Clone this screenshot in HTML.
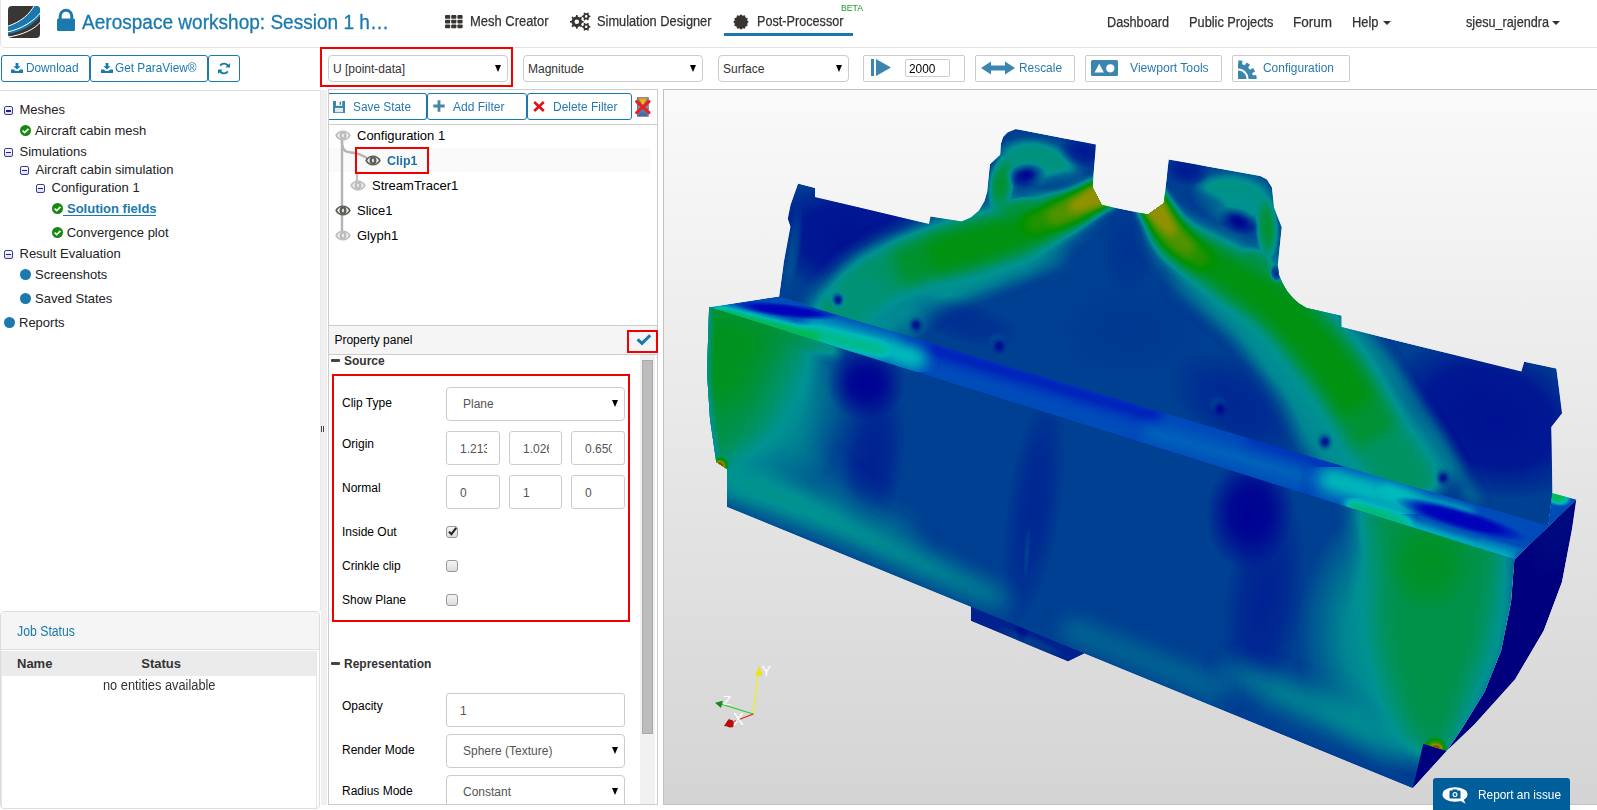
<!DOCTYPE html>
<html>
<head>
<meta charset="utf-8">
<title>Aerospace workshop</title>
<style>
*{box-sizing:border-box;margin:0;padding:0}
html,body{width:1597px;height:810px;overflow:hidden;background:#fff;font-family:"Liberation Sans",sans-serif;color:#222}
.abs{position:absolute}
#hdr{position:absolute;left:0;top:-2px;width:1610px;height:50px;border:1px solid #e4e4e4;border-radius:0 0 0 5px;background:#fff}
.lato{font-family:"Liberation Sans",sans-serif}
.t{position:absolute;white-space:nowrap;line-height:1}
.nav{font-size:14.2px;color:#333;top:15px}
.btn{position:absolute;border:1px solid #1a7aad;border-radius:3px;background:#fff;color:#1a7aad;font-size:13px;height:27px}
.sel{position:absolute;border:1px solid #ccc;border-radius:4px;background:#fff;height:26px;font-size:12px;color:#333}
.sel .tx{position:absolute;left:5px;top:7px;line-height:1;white-space:nowrap}
.sel .ar{position:absolute;right:6px;top:9px;width:0;height:0;border-left:3.5px solid transparent;border-right:3.5px solid transparent;border-top:7px solid #000}
.tb{position:absolute;border:1px solid #ccc;border-radius:2px;background:#fff;height:28px;top:54px;font-size:12px;color:#2a7ab0}
.tree{font-size:13px;color:#222}
.exp{position:absolute;width:9px;height:9px;border:1px solid #3a3aa0;border-radius:2px;background:linear-gradient(#fff,#dde)}
.exp:after{content:"";position:absolute;left:1px;top:3px;width:5px;height:1.5px;background:#22228a}
.ok{position:absolute;width:11px;height:11px;border-radius:50%;background:#138a13}
.dot{position:absolute;width:11px;height:11px;border-radius:50%;background:#1a7aad}
.lbl{position:absolute;font-size:12px;color:#000;white-space:nowrap;line-height:1}
.inp{position:absolute;border:1px solid #ccc;border-radius:3px;background:#fff;height:34px;font-size:12px;color:#555;overflow:hidden}
.inp span{position:absolute;left:13px;top:11px;line-height:1;white-space:nowrap}
.cb{position:absolute;width:12px;height:12px;border:1px solid #999;border-radius:3px;background:linear-gradient(#f4f4f4,#ddd)}
</style>
</head>
<body>
<!-- HEADER -->
<div id="hdr"></div>

<svg class="abs" style="left:8px;top:6px" width="32" height="32" viewBox="0 0 32 32">
<defs><clipPath id="lgc"><rect x="0" y="0" width="32" height="32" rx="4"/></clipPath></defs>
<g clip-path="url(#lgc)">
<rect width="32" height="32" fill="#3a3633"/>
<path d="M-1 20.5 C13 16 22 8 26.5 -1 L33 -1 L33 9 C26 19 14 26 -1 28.5 Z" fill="#1a78ae"/>
<path d="M-1 20.5 C13 16 22 8 26.5 -1" fill="none" stroke="#fff" stroke-width="1"/>
<path d="M-1 26 C14 23 26 15 33 6" fill="none" stroke="#fff" stroke-width="1"/>
<path d="M-1 31.2 C15 29 27 23 33 15.5" fill="none" stroke="#fff" stroke-width="1"/>
</g></svg>
<svg class="abs" style="left:56px;top:8px" width="20" height="24" viewBox="0 0 20 24">
<path d="M4.2 11.5 V8.1 a5.8 5.8 0 0 1 11.6 0 V11.5" fill="none" stroke="#1a7aad" stroke-width="3"/>
<rect x="1" y="10.5" width="18" height="12.5" rx="1.5" fill="#1a7aad"/>
</svg>
<span class="t" style="left:82px;top:12.27px;font-size:20px;color:#1a7aad;font-weight:400;transform:scaleX(0.9522);transform-origin:0 0;-webkit-text-stroke:0.3px #1a7aad;">Aerospace workshop: Session 1 h…</span>
<svg class="abs" style="left:445px;top:14.5px" width="18" height="14" viewBox="0 0 18 14"><rect x="0.0" y="0.0" width="5.2" height="3.8" rx="0.9" fill="#3a3430"/><rect x="6.2" y="0.0" width="5.2" height="3.8" rx="0.9" fill="#3a3430"/><rect x="12.4" y="0.0" width="5.2" height="3.8" rx="0.9" fill="#3a3430"/><rect x="0.0" y="4.7" width="5.2" height="3.8" rx="0.9" fill="#3a3430"/><rect x="6.2" y="4.7" width="5.2" height="3.8" rx="0.9" fill="#3a3430"/><rect x="12.4" y="4.7" width="5.2" height="3.8" rx="0.9" fill="#3a3430"/><rect x="0.0" y="9.4" width="5.2" height="3.8" rx="0.9" fill="#3a3430"/><rect x="6.2" y="9.4" width="5.2" height="3.8" rx="0.9" fill="#3a3430"/><rect x="12.4" y="9.4" width="5.2" height="3.8" rx="0.9" fill="#3a3430"/></svg><span class="t" style="left:470px;top:13.95px;font-size:14px;color:#333;font-weight:400;transform:scaleX(0.9256);transform-origin:0 0;-webkit-text-stroke:0.25px #333;">Mesh Creator</span><svg class="abs" style="left:570px;top:12px" width="21" height="19" viewBox="0 0 21 19"><path d="M13.66 9.04 L13.66 10.56 L12.01 10.76 L11.17 12.80 L12.18 14.11 L11.11 15.18 L9.80 14.17 L7.76 15.01 L7.56 16.66 L6.04 16.66 L5.84 15.01 L3.80 14.17 L2.49 15.18 L1.42 14.11 L2.43 12.80 L1.59 10.76 L-0.06 10.56 L-0.06 9.04 L1.59 8.84 L2.43 6.80 L1.42 5.49 L2.49 4.42 L3.80 5.43 L5.84 4.59 L6.04 2.94 L7.56 2.94 L7.76 4.59 L9.80 5.43 L11.11 4.42 L12.18 5.49 L11.17 6.80 L12.01 8.84Z M9.10 9.80 a2.3 2.3 0 1 0 -4.6 0 a2.3 2.3 0 1 0 4.6 0Z" fill="#3a3430" fill-rule="evenodd"/><path d="M20.45 3.77 L20.45 5.03 L19.28 5.28 L18.50 6.63 L18.87 7.77 L17.78 8.40 L16.98 7.50 L15.42 7.50 L14.62 8.40 L13.53 7.77 L13.90 6.63 L13.12 5.28 L11.95 5.03 L11.95 3.77 L13.12 3.52 L13.90 2.17 L13.53 1.03 L14.62 0.40 L15.42 1.30 L16.98 1.30 L17.78 0.40 L18.87 1.03 L18.50 2.17 L19.28 3.52Z M17.50 4.40 a1.3 1.3 0 1 0 -2.6 0 a1.3 1.3 0 1 0 2.6 0Z" fill="#3a3430" fill-rule="evenodd"/><path d="M20.45 14.17 L20.45 15.43 L19.28 15.68 L18.50 17.03 L18.87 18.17 L17.78 18.80 L16.98 17.90 L15.42 17.90 L14.62 18.80 L13.53 18.17 L13.90 17.03 L13.12 15.68 L11.95 15.43 L11.95 14.17 L13.12 13.92 L13.90 12.57 L13.53 11.43 L14.62 10.80 L15.42 11.70 L16.98 11.70 L17.78 10.80 L18.87 11.43 L18.50 12.57 L19.28 13.92Z M17.50 14.80 a1.3 1.3 0 1 0 -2.6 0 a1.3 1.3 0 1 0 2.6 0Z" fill="#3a3430" fill-rule="evenodd"/></svg><span class="t" style="left:597px;top:13.95px;font-size:14px;color:#333;font-weight:400;transform:scaleX(0.9138);transform-origin:0 0;-webkit-text-stroke:0.25px #333;">Simulation Designer</span><svg class="abs" style="left:733px;top:13.5px" width="16" height="16" viewBox="0 0 16 16"><polygon points="15.70 8.00 14.18 9.66 14.67 11.85 12.53 12.53 11.85 14.67 9.66 14.18 8.00 15.70 6.34 14.18 4.15 14.67 3.47 12.53 1.33 11.85 1.82 9.66 0.30 8.00 1.82 6.34 1.33 4.15 3.47 3.47 4.15 1.33 6.34 1.82 8.00 0.30 9.66 1.82 11.85 1.33 12.53 3.47 14.67 4.15 14.18 6.34" fill="#3a3430"/></svg><span class="t" style="left:756.5px;top:13.95px;font-size:14px;color:#333;font-weight:400;transform:scaleX(0.9038);transform-origin:0 0;-webkit-text-stroke:0.25px #333;">Post-Processor</span><span class="t" style="left:841px;top:4.18px;font-size:9px;color:#1f9a2a;font-weight:400;transform:scaleX(0.9631);transform-origin:0 0;">BETA</span><div class="abs" style="left:724px;top:33px;width:129px;height:3px;background:#1a78ae"></div><span class="t" style="left:1107px;top:14.95px;font-size:14px;color:#333;font-weight:400;transform:scaleX(0.9051);transform-origin:0 0;-webkit-text-stroke:0.25px #333;">Dashboard</span><span class="t" style="left:1189px;top:14.95px;font-size:14px;color:#333;font-weight:400;transform:scaleX(0.9126);transform-origin:0 0;-webkit-text-stroke:0.25px #333;">Public Projects</span><span class="t" style="left:1293px;top:14.95px;font-size:14px;color:#333;font-weight:400;transform:scaleX(0.9641);transform-origin:0 0;-webkit-text-stroke:0.25px #333;">Forum</span><span class="t" style="left:1352px;top:14.95px;font-size:14px;color:#333;font-weight:400;transform:scaleX(0.9202);transform-origin:0 0;-webkit-text-stroke:0.25px #333;">Help</span><div class="abs" style="left:1383px;top:21px;width:0;height:0;border-left:4px solid transparent;border-right:4px solid transparent;border-top:4px solid #333"></div><span class="t" style="left:1466px;top:14.95px;font-size:14px;color:#333;font-weight:400;transform:scaleX(0.9037);transform-origin:0 0;-webkit-text-stroke:0.25px #333;">sjesu_rajendra</span><div class="abs" style="left:1552px;top:21px;width:0;height:0;border-left:4px solid transparent;border-right:4px solid transparent;border-top:4px solid #333"></div>
<div class="btn" style="left:1px;top:55px;width:89px"></div><svg class="abs" style="left:11px;top:62.5px" width="12" height="10" viewBox="0 0 12 10"><path d="M4.6 0h2.8v3.2h2.2L6 6.6 2.4 3.2h2.2z M0 6.6h3l1.6 1.5h2.8L9 6.6h3V10H0z" fill="#1a7aad"/></svg><span class="t" style="left:25.5px;top:61.3px;font-size:13px;color:#1a7aad;font-weight:400;transform:scaleX(0.9079);transform-origin:0 0;">Download</span><div class="btn" style="left:90px;top:55px;width:118px"></div><svg class="abs" style="left:101px;top:62.5px" width="12" height="10" viewBox="0 0 12 10"><path d="M4.6 0h2.8v3.2h2.2L6 6.6 2.4 3.2h2.2z M0 6.6h3l1.6 1.5h2.8L9 6.6h3V10H0z" fill="#1a7aad"/></svg><span class="t" style="left:115px;top:61.3px;font-size:13px;color:#1a7aad;font-weight:400;transform:scaleX(0.9101);transform-origin:0 0;">Get ParaView®</span><div class="btn" style="left:208px;top:55px;width:32px"></div><svg class="abs" style="left:218px;top:62px" width="12" height="13" viewBox="0 0 12 13"><path d="M10.3 4.6 A4.6 4.6 0 0 0 2.2 3.6" fill="none" stroke="#1a7aad" stroke-width="1.9"/><path d="M1.7 8.4 A4.6 4.6 0 0 0 9.8 9.4" fill="none" stroke="#1a7aad" stroke-width="1.9"/><path d="M12 1v4.6H7.4z M0 12V7.4h4.6z" fill="#1a7aad"/></svg><div class="abs" style="left:320px;top:47px;width:193px;height:40px;border:2px solid #f00000"></div><div class="sel" style="left:328px;top:55px;width:180px;height:27px"></div><span class="t" style="left:333px;top:62.64px;font-size:12px;color:#333;font-weight:400;">U [point-data]</span><div class="abs" style="left:495px;top:64.5px;width:0;height:0;border-left:3.5px solid transparent;border-right:3.5px solid transparent;border-top:7px solid #000"></div><div class="sel" style="left:523px;top:55px;width:180px;height:27px"></div><span class="t" style="left:528px;top:62.64px;font-size:12px;color:#333;font-weight:400;">Magnitude</span><div class="abs" style="left:690px;top:64.5px;width:0;height:0;border-left:3.5px solid transparent;border-right:3.5px solid transparent;border-top:7px solid #000"></div><div class="sel" style="left:718px;top:55px;width:131px;height:27px"></div><span class="t" style="left:723px;top:62.64px;font-size:12px;color:#333;font-weight:400;">Surface</span><div class="abs" style="left:836px;top:64.5px;width:0;height:0;border-left:3.5px solid transparent;border-right:3.5px solid transparent;border-top:7px solid #000"></div><div class="tb" style="left:863px;width:102px;top:55px;height:27px"></div><svg class="abs" style="left:871px;top:59px" width="21" height="17" viewBox="0 0 21 17"><rect x="0" y="0" width="3" height="17" fill="#3a86ae"/><path d="M5 0 L20 8.5 L5 17z" fill="#3a86ae"/></svg><div class="abs" style="left:905px;top:59px;width:45px;height:18px;border:1px solid #ccc;border-radius:2px;background:#fff"></div><span class="t" style="left:909px;top:61.5px;font-size:13px;color:#000;font-weight:400;transform:scaleX(0.9163);transform-origin:0 0;">2000</span><div class="tb" style="left:975px;width:100px;top:55px;height:27px"></div><svg class="abs" style="left:981px;top:61px" width="34" height="14" viewBox="0 0 34 14"><path d="M0 7 L10 0.5 V4.6 H24 V0.5 L34 7 L24 13.5 V9.4 H10 V13.5z" fill="#3a86ae"/></svg><span class="t" style="left:1018.5px;top:62.14px;font-size:12px;color:#2a7ab0;font-weight:400;transform:scaleX(0.9917);transform-origin:0 0;">Rescale</span><div class="tb" style="left:1085px;width:137px;top:55px;height:27px"></div><svg class="abs" style="left:1091px;top:60px" width="27" height="16" viewBox="0 0 27 16"><rect width="27" height="16" rx="1.5" fill="#3a86ae"/><path d="M3.5 12.5 L8.2 3.8 L12.9 12.5z" fill="#fff"/><circle cx="19.3" cy="8.3" r="4.1" fill="#fff"/></svg><span class="t" style="left:1130.3px;top:62.14px;font-size:12px;color:#2a7ab0;font-weight:400;transform:scaleX(1.0141);transform-origin:0 0;">Viewport Tools</span><div class="tb" style="left:1232px;width:118px;top:55px;height:27px"></div><svg class="abs" style="left:1238px;top:58px" width="21" height="21" viewBox="0 0 21 21"><path d="M0 12.5 A8.5 8.5 0 0 1 8.5 21 H0z" fill="#3a86ae"/><path d="M0 5.8 A15.2 15.2 0 0 1 15.2 21 H10.6 A10.6 10.6 0 0 0 0 10.4z" fill="#3a86ae"/><rect x="0.12" y="2.55" width="4" height="5" fill="#3a86ae" transform="rotate(8 2.12 5.95)"/><rect x="6.50" y="5.00" width="4" height="5" fill="#3a86ae" transform="rotate(34 8.50 8.40)"/><rect x="11.16" y="10.00" width="4" height="5" fill="#3a86ae" transform="rotate(60 13.16 13.40)"/><rect x="13.12" y="16.01" width="4" height="5" fill="#3a86ae" transform="rotate(84 15.12 19.41)"/></svg><span class="t" style="left:1262.5px;top:62.14px;font-size:12px;color:#2a7ab0;font-weight:400;transform:scaleX(0.9945);transform-origin:0 0;">Configuration</span><div class="abs" style="left:0;top:90px;width:321px;height:1px;background:#ddd"></div>
<div class="exp" style="left:4px;top:106.0px"></div><span class="t" style="left:19.5px;top:102.6px;font-size:13px;color:#222;font-weight:400;">Meshes</span><svg class="abs" style="left:20px;top:125.0px" width="11" height="11" viewBox="0 0 11 11"><circle cx="5.5" cy="5.5" r="5.5" fill="#13890f"/><path d="M2.6 5.6 L4.7 7.6 L8.4 3.8" fill="none" stroke="#fff" stroke-width="1.7"/></svg><span class="t" style="left:35px;top:124.1px;font-size:13px;color:#222;font-weight:400;">Aircraft cabin mesh</span><div class="exp" style="left:4px;top:147.5px"></div><span class="t" style="left:19.5px;top:145.1px;font-size:13px;color:#222;font-weight:400;">Simulations</span><div class="exp" style="left:20px;top:165.5px"></div><span class="t" style="left:35.5px;top:163.3px;font-size:13px;color:#222;font-weight:400;">Aircraft cabin simulation</span><div class="exp" style="left:36px;top:183.5px"></div><span class="t" style="left:51.5px;top:181.3px;font-size:13px;color:#222;font-weight:400;">Configuration 1</span><svg class="abs" style="left:52px;top:203.0px" width="11" height="11" viewBox="0 0 11 11"><circle cx="5.5" cy="5.5" r="5.5" fill="#13890f"/><path d="M2.6 5.6 L4.7 7.6 L8.4 3.8" fill="none" stroke="#fff" stroke-width="1.7"/></svg><span class="t" style="left:67px;top:202.2px;font-size:13px;color:#1a7aad;font-weight:700;">Solution fields</span><div class="abs" style="left:63px;top:214.5px;width:93px;height:1px;background:#1a7aad"></div><svg class="abs" style="left:52px;top:227.0px" width="11" height="11" viewBox="0 0 11 11"><circle cx="5.5" cy="5.5" r="5.5" fill="#13890f"/><path d="M2.6 5.6 L4.7 7.6 L8.4 3.8" fill="none" stroke="#fff" stroke-width="1.7"/></svg><span class="t" style="left:66.7px;top:226.3px;font-size:13px;color:#222;font-weight:400;">Convergence plot</span><div class="exp" style="left:4px;top:249.5px"></div><span class="t" style="left:19.5px;top:247.1px;font-size:13px;color:#222;font-weight:400;">Result Evaluation</span><div class="dot" style="left:20px;top:269.0px"></div><span class="t" style="left:35px;top:268.3px;font-size:13px;color:#222;font-weight:400;">Screenshots</span><div class="dot" style="left:20px;top:293.0px"></div><span class="t" style="left:35px;top:292.3px;font-size:13px;color:#222;font-weight:400;">Saved States</span><div class="dot" style="left:4px;top:317.0px"></div><span class="t" style="left:19px;top:316.1px;font-size:13px;color:#222;font-weight:400;">Reports</span><div class="abs" style="left:0;top:611px;width:320px;height:198px;border:1px solid #ddd;border-radius:4px;background:#fff"></div><div class="abs" style="left:1px;top:612px;width:318px;height:38px;background:#f5f5f5;border-bottom:1px solid #ddd;border-radius:3px 3px 0 0"></div><span class="t" style="left:16.5px;top:623.65px;font-size:14px;color:#1a7aad;font-weight:400;transform:scaleX(0.8767);transform-origin:0 0;">Job Status</span><div class="abs" style="left:2px;top:651px;width:315px;height:25px;background:#ebebeb"></div><div class="abs" style="left:316px;top:651px;width:1px;height:157px;background:#e6e6e6"></div><div class="abs" style="left:1px;top:651px;width:1px;height:157px;background:#e6e6e6"></div><span class="t" style="left:17px;top:657.0px;font-size:13px;color:#333;font-weight:700;">Name</span><span class="t" style="left:141.3px;top:657.0px;font-size:13px;color:#333;font-weight:700;">Status</span><span class="t" style="left:102.6px;top:678.15px;font-size:14px;color:#333;font-weight:400;transform:scaleX(0.9148);transform-origin:0 0;">no entities available</span><div class="abs" style="left:320px;top:90px;width:1px;height:521px;background:#e8e8e8"></div><div class="abs" style="left:321px;top:90px;width:6px;height:720px;background:#f0f0f0"></div><div class="abs" style="left:321px;top:426px;width:1px;height:6px;background:#444"></div><div class="abs" style="left:323px;top:426px;width:1px;height:6px;background:#444"></div>
<div class="abs" style="left:328px;top:89px;width:330px;height:716px;border:1px solid #ccc;background:#fff"></div><div class="btn" style="left:329px;top:93px;width:98px;border-left:none;border-radius:0 3px 3px 0"></div><svg class="abs" style="left:333px;top:101px" width="12" height="12" viewBox="0 0 12 12"><rect x="0" y="0" width="12" height="12" fill="#3a86ae"/><rect x="3" y="0" width="6.2" height="4.8" fill="#fff"/><rect x="6.6" y="0.6" width="1.5" height="3.2" fill="#3a86ae"/><rect x="2" y="7" width="8" height="4.2" fill="#f2f2f2"/><rect x="2" y="8.4" width="8" height="0.7" fill="#cfd8dc"/><rect x="2" y="9.8" width="8" height="0.7" fill="#cfd8dc"/></svg><span class="t" style="left:353.3px;top:101.14px;font-size:12px;color:#2a7ab0;font-weight:400;transform:scaleX(0.9878);transform-origin:0 0;">Save State</span><div class="btn" style="left:427px;top:93px;width:100px"></div><svg class="abs" style="left:433px;top:100px" width="12" height="12" viewBox="0 0 12 12"><path d="M4.6 0.3h2.8v4.3H11.7v2.8H7.4v4.3H4.6V7.4H0.3V4.6h4.3z" fill="#4687a8"/></svg><span class="t" style="left:453px;top:101.14px;font-size:12px;color:#2a7ab0;font-weight:400;transform:scaleX(1.0027);transform-origin:0 0;">Add Filter</span><div class="btn" style="left:527px;top:93px;width:105px"></div><svg class="abs" style="left:533px;top:101px" width="12" height="11" viewBox="0 0 12 11"><path d="M1.2 1 L10.8 10 M10.8 1 L1.2 10" stroke="#e0101a" stroke-width="2.6" fill="none"/></svg><span class="t" style="left:553px;top:101.14px;font-size:12px;color:#2a7ab0;font-weight:400;transform:scaleX(0.9971);transform-origin:0 0;">Delete Filter</span><svg class="abs" style="left:633px;top:96px" width="20" height="22" viewBox="633 96 20 22"><defs><linearGradient id="hg1" x1="0" y1="0" x2="0" y2="1"><stop offset="0" stop-color="#f7941d"/><stop offset="1" stop-color="#ffd400"/></linearGradient><linearGradient id="hg2" x1="0" y1="0" x2="0" y2="1"><stop offset="0" stop-color="#27a3dd"/><stop offset="1" stop-color="#4a5aa8"/></linearGradient></defs><rect x="637" y="97.2" width="11.8" height="19.6" fill="#6f7a7c"/><rect x="638.2" y="103" width="9.4" height="8" fill="#7c9a8e"/><path d="M638 98.2H647.8L642.9 104.5z" fill="url(#hg1)"/><path d="M638 115.8H647.8L642.9 108.5z" fill="url(#hg2)"/><path d="M636.6 101.6 L649.1 112.6 M649.1 101.6 L636.6 112.6" stroke="#ee1c24" stroke-width="3" stroke-linecap="round"/></svg><div class="abs" style="left:329px;top:124px;width:328px;height:1px;background:#ccc"></div><div class="abs" style="left:329px;top:148px;width:322px;height:24px;background:#fafafa"></div><svg class="abs" style="left:329px;top:125px" width="328" height="200" viewBox="329 125 328 200"><path d="M342 140 V232" stroke="#b4b4b4" stroke-width="2.4" fill="none"/><path d="M342 141 C342 150 345 152 351 152.5 C358 153 362 155 367 158" stroke="#b4b4b4" stroke-width="2.4" fill="none"/><path d="M357 173 V182" stroke="#c4c4c4" stroke-width="2.4" fill="none"/></svg><svg class="abs" style="left:334.5px;top:130.0px" width="16" height="11" viewBox="0 0 16 11"><path d="M0.2 5.5 C3.4 -1.2 12.6 -1.2 15.8 5.5 C12.6 12.2 3.4 12.2 0.2 5.5z" fill="#bcbcbc"/><path d="M2.2 5.5 C4.8 0.6 11.2 0.6 13.8 5.5 C11.2 10.4 4.8 10.4 2.2 5.5z" fill="#f2f2f2"/><ellipse cx="8" cy="5.5" rx="3.5" ry="3.9" fill="#bcbcbc"/><ellipse cx="8" cy="5.5" rx="1.1" ry="1.9" fill="#f2f2f2" opacity="0.85"/></svg><span class="t" style="left:357px;top:129.2px;font-size:13px;color:#000;font-weight:400;">Configuration 1</span><div class="abs" style="left:355px;top:147px;width:74px;height:27px;border:2px solid #f00000"></div><svg class="abs" style="left:364.5px;top:155.0px" width="16" height="11" viewBox="0 0 16 11"><path d="M0.2 5.5 C3.4 -1.2 12.6 -1.2 15.8 5.5 C12.6 12.2 3.4 12.2 0.2 5.5z" fill="#5c5b55"/><path d="M2.2 5.5 C4.8 0.6 11.2 0.6 13.8 5.5 C11.2 10.4 4.8 10.4 2.2 5.5z" fill="#f4f4f0"/><ellipse cx="8" cy="5.5" rx="3.5" ry="3.9" fill="#5c5b55"/><ellipse cx="8" cy="5.5" rx="1.1" ry="1.9" fill="#f4f4f0" opacity="0.85"/></svg><span class="t" style="left:387px;top:154.2px;font-size:13px;color:#1f6f9f;font-weight:700;transform:scaleX(0.9592);transform-origin:0 0;">Clip1</span><svg class="abs" style="left:349.5px;top:180.0px" width="16" height="11" viewBox="0 0 16 11"><path d="M0.2 5.5 C3.4 -1.2 12.6 -1.2 15.8 5.5 C12.6 12.2 3.4 12.2 0.2 5.5z" fill="#bcbcbc"/><path d="M2.2 5.5 C4.8 0.6 11.2 0.6 13.8 5.5 C11.2 10.4 4.8 10.4 2.2 5.5z" fill="#f2f2f2"/><ellipse cx="8" cy="5.5" rx="3.5" ry="3.9" fill="#bcbcbc"/><ellipse cx="8" cy="5.5" rx="1.1" ry="1.9" fill="#f2f2f2" opacity="0.85"/></svg><span class="t" style="left:372px;top:179.2px;font-size:13px;color:#000;font-weight:400;">StreamTracer1</span><svg class="abs" style="left:334.5px;top:205.0px" width="16" height="11" viewBox="0 0 16 11"><path d="M0.2 5.5 C3.4 -1.2 12.6 -1.2 15.8 5.5 C12.6 12.2 3.4 12.2 0.2 5.5z" fill="#5c5b55"/><path d="M2.2 5.5 C4.8 0.6 11.2 0.6 13.8 5.5 C11.2 10.4 4.8 10.4 2.2 5.5z" fill="#f4f4f0"/><ellipse cx="8" cy="5.5" rx="3.5" ry="3.9" fill="#5c5b55"/><ellipse cx="8" cy="5.5" rx="1.1" ry="1.9" fill="#f4f4f0" opacity="0.85"/></svg><span class="t" style="left:357px;top:204.2px;font-size:13px;color:#000;font-weight:400;">Slice1</span><svg class="abs" style="left:334.5px;top:230.0px" width="16" height="11" viewBox="0 0 16 11"><path d="M0.2 5.5 C3.4 -1.2 12.6 -1.2 15.8 5.5 C12.6 12.2 3.4 12.2 0.2 5.5z" fill="#bcbcbc"/><path d="M2.2 5.5 C4.8 0.6 11.2 0.6 13.8 5.5 C11.2 10.4 4.8 10.4 2.2 5.5z" fill="#f2f2f2"/><ellipse cx="8" cy="5.5" rx="3.5" ry="3.9" fill="#bcbcbc"/><ellipse cx="8" cy="5.5" rx="1.1" ry="1.9" fill="#f2f2f2" opacity="0.85"/></svg><span class="t" style="left:357px;top:229.2px;font-size:13px;color:#000;font-weight:400;">Glyph1</span><div class="abs" style="left:329px;top:325px;width:328px;height:30px;background:#f5f5f5;border-top:1px solid #ccc;border-bottom:1px solid #ccc"></div><span class="t" style="left:334.4px;top:333.64px;font-size:12px;color:#000;font-weight:400;">Property panel</span><div class="abs" style="left:627px;top:330px;width:31px;height:23px;border:2px solid #f00000"></div><svg class="abs" style="left:636px;top:333px" width="16" height="13" viewBox="0 0 16 13"><path d="M1.6 6.4 L6 10.4 L14.2 2.2" fill="none" stroke="#1a78ae" stroke-width="3"/></svg><div class="abs" style="left:640px;top:355px;width:15px;height:449px;background:#f1f1f1"></div><div class="abs" style="left:642px;top:360px;width:11px;height:374px;background:#bcbcbc;border:1px solid #aaa"></div><div class="abs" style="left:331px;top:359px;width:9px;height:3px;background:#444;border-radius:1px"></div><span class="t" style="left:344px;top:355.24px;font-size:12px;color:#333;font-weight:700;">Source</span><div class="abs" style="left:332px;top:374px;width:298px;height:248px;border:2px solid #f00000"></div><span class="t" style="left:342px;top:397.04px;font-size:12px;color:#000;font-weight:400;">Clip Type</span><div class="sel" style="left:446px;top:387px;width:179px;height:34px"></div><span class="t" style="left:463px;top:398.14px;font-size:12px;color:#555;font-weight:400;">Plane</span><div class="abs" style="left:612px;top:400.0px;width:0;height:0;border-left:3.5px solid transparent;border-right:3.5px solid transparent;border-top:7px solid #000"></div><span class="t" style="left:342px;top:438.04px;font-size:12px;color:#000;font-weight:400;">Origin</span><div class="inp" style="left:446px;top:431px;width:54px"><span style="left:13px;width:27px;overflow:hidden;display:block">1.2134</span></div><div class="inp" style="left:509px;top:431px;width:53px"><span style="left:13px;width:26px;overflow:hidden;display:block">1.0266</span></div><div class="inp" style="left:571px;top:431px;width:54px"><span style="left:13px;width:27px;overflow:hidden;display:block">0.6500</span></div><span class="t" style="left:342px;top:482.04px;font-size:12px;color:#000;font-weight:400;">Normal</span><div class="inp" style="left:446px;top:475px;width:54px"><span style="left:13px;width:27px;overflow:hidden;display:block">0</span></div><div class="inp" style="left:509px;top:475px;width:53px"><span style="left:13px;width:26px;overflow:hidden;display:block">1</span></div><div class="inp" style="left:571px;top:475px;width:54px"><span style="left:13px;width:27px;overflow:hidden;display:block">0</span></div><span class="t" style="left:342px;top:526.04px;font-size:12px;color:#000;font-weight:400;">Inside Out</span><div class="cb" style="left:446px;top:526px"></div><svg class="abs" style="left:447px;top:526px" width="11" height="11" viewBox="0 0 11 11"><path d="M2 5.6 L4.4 8.2 L9.2 1.8" fill="none" stroke="#222" stroke-width="2"/></svg><span class="t" style="left:342px;top:560.04px;font-size:12px;color:#000;font-weight:400;">Crinkle clip</span><div class="cb" style="left:446px;top:560px"></div><span class="t" style="left:342px;top:594.04px;font-size:12px;color:#000;font-weight:400;">Show Plane</span><div class="cb" style="left:446px;top:594px"></div><div class="abs" style="left:331px;top:662px;width:9px;height:3px;background:#444;border-radius:1px"></div><span class="t" style="left:344px;top:658.04px;font-size:12px;color:#333;font-weight:700;">Representation</span><span class="t" style="left:342px;top:700.34px;font-size:12px;color:#000;font-weight:400;">Opacity</span><div class="inp" style="left:446px;top:693px;width:179px"><span style="left:13px;width:152px;overflow:hidden;display:block">1</span></div><span class="t" style="left:342px;top:744.04px;font-size:12px;color:#000;font-weight:400;">Render Mode</span><div class="sel" style="left:446px;top:734px;width:179px;height:34px"></div><span class="t" style="left:463px;top:745.14px;font-size:12px;color:#555;font-weight:400;">Sphere (Texture)</span><div class="abs" style="left:612px;top:747.0px;width:0;height:0;border-left:3.5px solid transparent;border-right:3.5px solid transparent;border-top:7px solid #000"></div><span class="t" style="left:342px;top:785.04px;font-size:12px;color:#000;font-weight:400;">Radius Mode</span><div class="abs" style="left:446px;top:775px;width:179px;height:29px;overflow:hidden"><div class="sel" style="left:0;top:0;width:179px;height:34px"></div></div><span class="t" style="left:463px;top:786.14px;font-size:12px;color:#555;font-weight:400;">Constant</span><div class="abs" style="left:612px;top:788px;width:0;height:0;border-left:3.5px solid transparent;border-right:3.5px solid transparent;border-top:7px solid #000"></div><div class="abs" style="left:320px;top:805px;width:340px;height:5px;background:#fff"></div><div class="abs" style="left:328px;top:804px;width:330px;height:1px;background:#ccc"></div>
<div class="abs" style="left:663px;top:89px;width:940px;height:716px;border:1px solid #c2c2c2;background:linear-gradient(#fafafa,#d4d4d4)"></div><svg class="abs" style="left:664px;top:90px" width="933" height="715" viewBox="664 90 933 715"><defs><filter id="b1" x="-50%" y="-50%" width="200%" height="200%" color-interpolation-filters="sRGB"><feGaussianBlur stdDeviation="5"/></filter><filter id="b2" x="-50%" y="-50%" width="200%" height="200%" color-interpolation-filters="sRGB"><feGaussianBlur stdDeviation="7"/></filter><filter id="b3" x="-50%" y="-50%" width="200%" height="200%" color-interpolation-filters="sRGB"><feGaussianBlur stdDeviation="4"/></filter><radialGradient id="r4"><stop offset="0" stop-color="rgb(0,0,0)" stop-opacity="1.000"/><stop offset="0.55" stop-color="rgb(0,0,0)" stop-opacity="0.900"/><stop offset="1" stop-color="rgb(0,0,0)" stop-opacity="0.000"/></radialGradient><filter id="b5" x="-50%" y="-50%" width="200%" height="200%" color-interpolation-filters="sRGB"><feGaussianBlur stdDeviation="8"/></filter><radialGradient id="r6"><stop offset="0" stop-color="rgb(0,0,0)" stop-opacity="1.000"/><stop offset="0.55" stop-color="rgb(0,0,0)" stop-opacity="0.920"/><stop offset="1" stop-color="rgb(0,0,0)" stop-opacity="0.000"/></radialGradient><filter id="b7" x="-50%" y="-50%" width="200%" height="200%" color-interpolation-filters="sRGB"><feGaussianBlur stdDeviation="2"/></filter><radialGradient id="r8"><stop offset="0" stop-color="rgb(107,107,107)" stop-opacity="0.950"/><stop offset="0.5" stop-color="rgb(107,107,107)" stop-opacity="0.712"/><stop offset="1" stop-color="rgb(107,107,107)" stop-opacity="0.000"/></radialGradient><filter id="cm_ledge" filterUnits="userSpaceOnUse" x="664" y="90" width="933" height="715" color-interpolation-filters="sRGB"><feComponentTransfer><feFuncR type="table" tableValues="0.000 0.000 0.000 0.730 0.730"/><feFuncG type="table" tableValues="0.000 0.730 0.730 0.730 0.000"/><feFuncB type="table" tableValues="0.730 0.730 0.000 0.000 0.000"/></feComponentTransfer></filter><clipPath id="cp_ledge"><polygon points="709.1,307.2 779.0,296.5 1010.0,366.5 1300.0,453.0 1548.0,525.0 1552.0,493.0 1576.3,499.6 1514.3,559.4"/></clipPath><radialGradient id="r9"><stop offset="0" stop-color="rgb(6,6,6)" stop-opacity="0.920"/><stop offset="0.6" stop-color="rgb(6,6,6)" stop-opacity="0.782"/><stop offset="1" stop-color="rgb(6,6,6)" stop-opacity="0.000"/></radialGradient><radialGradient id="r10"><stop offset="0" stop-color="rgb(6,6,6)" stop-opacity="0.920"/><stop offset="0.6" stop-color="rgb(6,6,6)" stop-opacity="0.782"/><stop offset="1" stop-color="rgb(6,6,6)" stop-opacity="0.000"/></radialGradient><radialGradient id="r11"><stop offset="0" stop-color="rgb(15,15,15)" stop-opacity="0.400"/><stop offset="0.5" stop-color="rgb(15,15,15)" stop-opacity="0.300"/><stop offset="1" stop-color="rgb(15,15,15)" stop-opacity="0.000"/></radialGradient><radialGradient id="r12"><stop offset="0" stop-color="rgb(23,23,23)" stop-opacity="0.500"/><stop offset="0.5" stop-color="rgb(23,23,23)" stop-opacity="0.375"/><stop offset="1" stop-color="rgb(23,23,23)" stop-opacity="0.000"/></radialGradient><filter id="b13" x="-50%" y="-50%" width="200%" height="200%" color-interpolation-filters="sRGB"><feGaussianBlur stdDeviation="6"/></filter><filter id="b14" x="-50%" y="-50%" width="200%" height="200%" color-interpolation-filters="sRGB"><feGaussianBlur stdDeviation="3.5"/></filter><radialGradient id="r15"><stop offset="0" stop-color="rgb(71,71,71)" stop-opacity="0.700"/><stop offset="0.55" stop-color="rgb(71,71,71)" stop-opacity="0.595"/><stop offset="1" stop-color="rgb(71,71,71)" stop-opacity="0.000"/></radialGradient><radialGradient id="r16"><stop offset="0" stop-color="rgb(69,69,69)" stop-opacity="1.000"/><stop offset="0.6" stop-color="rgb(69,69,69)" stop-opacity="0.900"/><stop offset="1" stop-color="rgb(69,69,69)" stop-opacity="0.000"/></radialGradient><radialGradient id="r17"><stop offset="0" stop-color="rgb(115,115,115)" stop-opacity="0.900"/><stop offset="0.5" stop-color="rgb(115,115,115)" stop-opacity="0.675"/><stop offset="1" stop-color="rgb(115,115,115)" stop-opacity="0.000"/></radialGradient><radialGradient id="r18"><stop offset="0" stop-color="rgb(107,107,107)" stop-opacity="0.750"/><stop offset="0.5" stop-color="rgb(107,107,107)" stop-opacity="0.562"/><stop offset="1" stop-color="rgb(107,107,107)" stop-opacity="0.000"/></radialGradient><radialGradient id="r19"><stop offset="0" stop-color="rgb(26,26,26)" stop-opacity="0.600"/><stop offset="0.5" stop-color="rgb(26,26,26)" stop-opacity="0.450"/><stop offset="1" stop-color="rgb(26,26,26)" stop-opacity="0.000"/></radialGradient><radialGradient id="r20"><stop offset="0" stop-color="rgb(0,0,0)" stop-opacity="1.000"/><stop offset="0.3" stop-color="rgb(0,0,0)" stop-opacity="0.850"/><stop offset="0.65" stop-color="rgb(0,0,0)" stop-opacity="0.400"/><stop offset="1" stop-color="rgb(0,0,0)" stop-opacity="0.000"/></radialGradient><radialGradient id="r21"><stop offset="0" stop-color="rgb(8,8,8)" stop-opacity="0.850"/><stop offset="0.5" stop-color="rgb(8,8,8)" stop-opacity="0.637"/><stop offset="1" stop-color="rgb(8,8,8)" stop-opacity="0.000"/></radialGradient><radialGradient id="r22"><stop offset="0" stop-color="rgb(66,66,66)" stop-opacity="1.000"/><stop offset="0.6" stop-color="rgb(66,66,66)" stop-opacity="0.900"/><stop offset="1" stop-color="rgb(66,66,66)" stop-opacity="0.000"/></radialGradient><radialGradient id="r23"><stop offset="0" stop-color="rgb(115,115,115)" stop-opacity="0.900"/><stop offset="0.5" stop-color="rgb(115,115,115)" stop-opacity="0.675"/><stop offset="1" stop-color="rgb(115,115,115)" stop-opacity="0.000"/></radialGradient><radialGradient id="r24"><stop offset="0" stop-color="rgb(107,107,107)" stop-opacity="0.700"/><stop offset="0.5" stop-color="rgb(107,107,107)" stop-opacity="0.525"/><stop offset="1" stop-color="rgb(107,107,107)" stop-opacity="0.000"/></radialGradient><radialGradient id="r25"><stop offset="0" stop-color="rgb(23,23,23)" stop-opacity="0.600"/><stop offset="0.5" stop-color="rgb(23,23,23)" stop-opacity="0.450"/><stop offset="1" stop-color="rgb(23,23,23)" stop-opacity="0.000"/></radialGradient><radialGradient id="r26"><stop offset="0" stop-color="rgb(0,0,0)" stop-opacity="1.000"/><stop offset="0.3" stop-color="rgb(0,0,0)" stop-opacity="0.850"/><stop offset="0.65" stop-color="rgb(0,0,0)" stop-opacity="0.400"/><stop offset="1" stop-color="rgb(0,0,0)" stop-opacity="0.000"/></radialGradient><radialGradient id="r27"><stop offset="0" stop-color="rgb(8,8,8)" stop-opacity="0.850"/><stop offset="0.5" stop-color="rgb(8,8,8)" stop-opacity="0.637"/><stop offset="1" stop-color="rgb(8,8,8)" stop-opacity="0.000"/></radialGradient><radialGradient id="r28"><stop offset="0" stop-color="rgb(5,5,5)" stop-opacity="0.850"/><stop offset="0.5" stop-color="rgb(5,5,5)" stop-opacity="0.637"/><stop offset="1" stop-color="rgb(5,5,5)" stop-opacity="0.000"/></radialGradient><radialGradient id="r29"><stop offset="0" stop-color="rgb(10,10,10)" stop-opacity="0.600"/><stop offset="0.5" stop-color="rgb(10,10,10)" stop-opacity="0.450"/><stop offset="1" stop-color="rgb(10,10,10)" stop-opacity="0.000"/></radialGradient><radialGradient id="r30"><stop offset="0" stop-color="rgb(13,13,13)" stop-opacity="0.500"/><stop offset="0.5" stop-color="rgb(13,13,13)" stop-opacity="0.375"/><stop offset="1" stop-color="rgb(13,13,13)" stop-opacity="0.000"/></radialGradient><radialGradient id="r31"><stop offset="0" stop-color="rgb(43,43,43)" stop-opacity="0.600"/><stop offset="0.5" stop-color="rgb(43,43,43)" stop-opacity="0.450"/><stop offset="1" stop-color="rgb(43,43,43)" stop-opacity="0.000"/></radialGradient><radialGradient id="r32"><stop offset="0" stop-color="rgb(48,48,48)" stop-opacity="0.350"/><stop offset="0.5" stop-color="rgb(48,48,48)" stop-opacity="0.262"/><stop offset="1" stop-color="rgb(48,48,48)" stop-opacity="0.000"/></radialGradient><radialGradient id="r33"><stop offset="0" stop-color="rgb(0,0,0)" stop-opacity="0.900"/><stop offset="0.3" stop-color="rgb(0,0,0)" stop-opacity="0.750"/><stop offset="0.6" stop-color="rgb(0,0,0)" stop-opacity="0.300"/><stop offset="1" stop-color="rgb(0,0,0)" stop-opacity="0.000"/></radialGradient><radialGradient id="r34"><stop offset="0" stop-color="rgb(48,48,48)" stop-opacity="0.350"/><stop offset="0.5" stop-color="rgb(48,48,48)" stop-opacity="0.262"/><stop offset="1" stop-color="rgb(48,48,48)" stop-opacity="0.000"/></radialGradient><radialGradient id="r35"><stop offset="0" stop-color="rgb(0,0,0)" stop-opacity="0.900"/><stop offset="0.3" stop-color="rgb(0,0,0)" stop-opacity="0.750"/><stop offset="0.6" stop-color="rgb(0,0,0)" stop-opacity="0.300"/><stop offset="1" stop-color="rgb(0,0,0)" stop-opacity="0.000"/></radialGradient><radialGradient id="r36"><stop offset="0" stop-color="rgb(48,48,48)" stop-opacity="0.350"/><stop offset="0.5" stop-color="rgb(48,48,48)" stop-opacity="0.262"/><stop offset="1" stop-color="rgb(48,48,48)" stop-opacity="0.000"/></radialGradient><radialGradient id="r37"><stop offset="0" stop-color="rgb(0,0,0)" stop-opacity="0.900"/><stop offset="0.3" stop-color="rgb(0,0,0)" stop-opacity="0.750"/><stop offset="0.6" stop-color="rgb(0,0,0)" stop-opacity="0.300"/><stop offset="1" stop-color="rgb(0,0,0)" stop-opacity="0.000"/></radialGradient><radialGradient id="r38"><stop offset="0" stop-color="rgb(48,48,48)" stop-opacity="0.350"/><stop offset="0.5" stop-color="rgb(48,48,48)" stop-opacity="0.262"/><stop offset="1" stop-color="rgb(48,48,48)" stop-opacity="0.000"/></radialGradient><radialGradient id="r39"><stop offset="0" stop-color="rgb(0,0,0)" stop-opacity="0.900"/><stop offset="0.3" stop-color="rgb(0,0,0)" stop-opacity="0.750"/><stop offset="0.6" stop-color="rgb(0,0,0)" stop-opacity="0.300"/><stop offset="1" stop-color="rgb(0,0,0)" stop-opacity="0.000"/></radialGradient><radialGradient id="r40"><stop offset="0" stop-color="rgb(48,48,48)" stop-opacity="0.350"/><stop offset="0.5" stop-color="rgb(48,48,48)" stop-opacity="0.262"/><stop offset="1" stop-color="rgb(48,48,48)" stop-opacity="0.000"/></radialGradient><radialGradient id="r41"><stop offset="0" stop-color="rgb(0,0,0)" stop-opacity="0.900"/><stop offset="0.3" stop-color="rgb(0,0,0)" stop-opacity="0.750"/><stop offset="0.6" stop-color="rgb(0,0,0)" stop-opacity="0.300"/><stop offset="1" stop-color="rgb(0,0,0)" stop-opacity="0.000"/></radialGradient><radialGradient id="r42"><stop offset="0" stop-color="rgb(48,48,48)" stop-opacity="0.350"/><stop offset="0.5" stop-color="rgb(48,48,48)" stop-opacity="0.262"/><stop offset="1" stop-color="rgb(48,48,48)" stop-opacity="0.000"/></radialGradient><radialGradient id="r43"><stop offset="0" stop-color="rgb(0,0,0)" stop-opacity="0.900"/><stop offset="0.3" stop-color="rgb(0,0,0)" stop-opacity="0.750"/><stop offset="0.6" stop-color="rgb(0,0,0)" stop-opacity="0.300"/><stop offset="1" stop-color="rgb(0,0,0)" stop-opacity="0.000"/></radialGradient><filter id="cm_wall" filterUnits="userSpaceOnUse" x="664" y="90" width="933" height="715" color-interpolation-filters="sRGB"><feComponentTransfer><feFuncR type="table" tableValues="0.000 0.000 0.000 0.575 0.575"/><feFuncG type="table" tableValues="0.000 0.575 0.575 0.575 0.000"/><feFuncB type="table" tableValues="0.575 0.575 0.000 0.000 0.000"/></feComponentTransfer></filter><clipPath id="cp_wall"><polygon points="798.0,183.4 815.0,188.0 815.0,197.0 929.0,224.0 930.5,216.5 961.7,221.4 971.0,217.5 979.0,210.5 984.5,201.0 987.2,191.5 988.5,178.0 989.9,164.3 1000.2,154.8 1000.8,144.0 1003.0,137.0 1007.6,132.3 1015.7,129.0 1095.9,144.5 1092.6,187.4 1101.8,205.1 1148.0,214.6 1163.8,203.2 1168.7,159.5 1260.3,176.0 1267.0,179.5 1272.0,187.5 1274.0,207.5 1281.8,227.2 1277.8,265.0 1279.0,275.0 1282.4,283.1 1287.0,291.0 1293.0,298.3 1299.0,303.5 1306.6,308.0 1341.4,315.8 1341.4,327.0 1521.4,371.5 1524.2,361.8 1556.4,368.5 1558.0,381.0 1562.0,413.3 1551.2,426.9 1552.5,492.0 1548.4,526.0 1300.0,453.5 1010.0,367.0 779.0,297.0 783.8,262.2 790.5,226.8 787.8,218.7 790.5,205.1"/></clipPath><radialGradient id="r44"><stop offset="0" stop-color="rgb(33,33,33)" stop-opacity="0.700"/><stop offset="0.5" stop-color="rgb(33,33,33)" stop-opacity="0.525"/><stop offset="1" stop-color="rgb(33,33,33)" stop-opacity="0.000"/></radialGradient><radialGradient id="r45"><stop offset="0" stop-color="rgb(5,5,5)" stop-opacity="0.800"/><stop offset="0.5" stop-color="rgb(5,5,5)" stop-opacity="0.600"/><stop offset="1" stop-color="rgb(5,5,5)" stop-opacity="0.000"/></radialGradient><filter id="cm_prot" filterUnits="userSpaceOnUse" x="664" y="90" width="933" height="715" color-interpolation-filters="sRGB"><feComponentTransfer><feFuncR type="table" tableValues="0.000 0.000 0.000 0.560 0.560"/><feFuncG type="table" tableValues="0.000 0.560 0.560 0.560 0.000"/><feFuncB type="table" tableValues="0.560 0.560 0.000 0.000 0.000"/></feComponentTransfer></filter><clipPath id="cp_prot"><polygon points="971.0,600.0 971.0,621.0 1068.0,661.5 1084.0,653.8 1084.0,646.0"/></clipPath><radialGradient id="r46"><stop offset="0" stop-color="rgb(8,8,8)" stop-opacity="0.700"/><stop offset="0.5" stop-color="rgb(8,8,8)" stop-opacity="0.525"/><stop offset="1" stop-color="rgb(8,8,8)" stop-opacity="0.000"/></radialGradient><radialGradient id="r47"><stop offset="0" stop-color="rgb(9,9,9)" stop-opacity="0.600"/><stop offset="0.5" stop-color="rgb(9,9,9)" stop-opacity="0.450"/><stop offset="1" stop-color="rgb(9,9,9)" stop-opacity="0.000"/></radialGradient><radialGradient id="r48"><stop offset="0" stop-color="rgb(43,43,43)" stop-opacity="0.400"/><stop offset="0.5" stop-color="rgb(43,43,43)" stop-opacity="0.300"/><stop offset="1" stop-color="rgb(43,43,43)" stop-opacity="0.000"/></radialGradient><filter id="b49" x="-50%" y="-50%" width="200%" height="200%" color-interpolation-filters="sRGB"><feGaussianBlur stdDeviation="10"/></filter><radialGradient id="r50"><stop offset="0" stop-color="rgb(9,9,9)" stop-opacity="0.700"/><stop offset="0.5" stop-color="rgb(9,9,9)" stop-opacity="0.525"/><stop offset="1" stop-color="rgb(9,9,9)" stop-opacity="0.000"/></radialGradient><filter id="b51" x="-50%" y="-50%" width="200%" height="200%" color-interpolation-filters="sRGB"><feGaussianBlur stdDeviation="11"/></filter><filter id="b52" x="-50%" y="-50%" width="200%" height="200%" color-interpolation-filters="sRGB"><feGaussianBlur stdDeviation="12"/></filter><radialGradient id="r53"><stop offset="0" stop-color="rgb(64,64,64)" stop-opacity="1.000"/><stop offset="0.55" stop-color="rgb(64,64,64)" stop-opacity="0.900"/><stop offset="1" stop-color="rgb(64,64,64)" stop-opacity="0.000"/></radialGradient><filter id="b54" x="-50%" y="-50%" width="200%" height="200%" color-interpolation-filters="sRGB"><feGaussianBlur stdDeviation="13"/></filter><filter id="b55" x="-50%" y="-50%" width="200%" height="200%" color-interpolation-filters="sRGB"><feGaussianBlur stdDeviation="2.5"/></filter><radialGradient id="r56"><stop offset="0" stop-color="rgb(0,0,0)" stop-opacity="1.000"/><stop offset="0.4" stop-color="rgb(0,0,0)" stop-opacity="0.850"/><stop offset="1" stop-color="rgb(0,0,0)" stop-opacity="0.000"/></radialGradient><radialGradient id="r57"><stop offset="0" stop-color="rgb(158,158,158)" stop-opacity="1.000"/><stop offset="0.5" stop-color="rgb(158,158,158)" stop-opacity="0.800"/><stop offset="1" stop-color="rgb(158,158,158)" stop-opacity="0.000"/></radialGradient><radialGradient id="r58"><stop offset="0" stop-color="rgb(235,235,235)" stop-opacity="1.000"/><stop offset="0.45" stop-color="rgb(235,235,235)" stop-opacity="0.850"/><stop offset="1" stop-color="rgb(235,235,235)" stop-opacity="0.000"/></radialGradient><radialGradient id="r59"><stop offset="0" stop-color="rgb(64,64,64)" stop-opacity="1.000"/><stop offset="0.6" stop-color="rgb(64,64,64)" stop-opacity="0.900"/><stop offset="1" stop-color="rgb(64,64,64)" stop-opacity="0.000"/></radialGradient><radialGradient id="r60"><stop offset="0" stop-color="rgb(117,117,117)" stop-opacity="0.750"/><stop offset="0.5" stop-color="rgb(117,117,117)" stop-opacity="0.562"/><stop offset="1" stop-color="rgb(117,117,117)" stop-opacity="0.000"/></radialGradient><radialGradient id="r61"><stop offset="0" stop-color="rgb(0,0,0)" stop-opacity="1.000"/><stop offset="0.45" stop-color="rgb(0,0,0)" stop-opacity="0.850"/><stop offset="1" stop-color="rgb(0,0,0)" stop-opacity="0.000"/></radialGradient><radialGradient id="r62"><stop offset="0" stop-color="rgb(158,158,158)" stop-opacity="1.000"/><stop offset="0.55" stop-color="rgb(158,158,158)" stop-opacity="0.850"/><stop offset="1" stop-color="rgb(158,158,158)" stop-opacity="0.000"/></radialGradient><radialGradient id="r63"><stop offset="0" stop-color="rgb(235,235,235)" stop-opacity="1.000"/><stop offset="0.45" stop-color="rgb(235,235,235)" stop-opacity="0.850"/><stop offset="1" stop-color="rgb(235,235,235)" stop-opacity="0.000"/></radialGradient><filter id="cm_front" filterUnits="userSpaceOnUse" x="664" y="90" width="933" height="715" color-interpolation-filters="sRGB"><feComponentTransfer><feFuncR type="table" tableValues="0.000 0.000 0.000 0.575 0.575"/><feFuncG type="table" tableValues="0.000 0.575 0.575 0.575 0.000"/><feFuncB type="table" tableValues="0.575 0.575 0.000 0.000 0.000"/></feComponentTransfer></filter><clipPath id="cp_front"><polygon points="709.1,307.2 1514.3,559.4 1511.0,602.0 1501.0,651.0 1484.6,691.8 1462.0,728.5 1446.7,751.0 1423.2,743.8 1412.7,788.3 727.0,506.9 727.0,468.9 716.2,462.1 710.0,418.9 707.0,372.6"/></clipPath><radialGradient id="r64"><stop offset="0" stop-color="rgb(10,10,10)" stop-opacity="0.500"/><stop offset="0.5" stop-color="rgb(10,10,10)" stop-opacity="0.375"/><stop offset="1" stop-color="rgb(10,10,10)" stop-opacity="0.000"/></radialGradient><filter id="cm_endf" filterUnits="userSpaceOnUse" x="664" y="90" width="933" height="715" color-interpolation-filters="sRGB"><feComponentTransfer><feFuncR type="table" tableValues="0.000 0.000 0.000 0.500 0.500"/><feFuncG type="table" tableValues="0.000 0.500 0.500 0.500 0.000"/><feFuncB type="table" tableValues="0.500 0.500 0.000 0.000 0.000"/></feComponentTransfer></filter><clipPath id="cp_endf"><polygon points="1514.3,559.4 1576.3,499.6 1572.0,529.0 1562.0,582.0 1543.7,630.7 1515.0,679.6 1474.4,724.4 1446.7,750.9 1412.7,788.3 1423.2,743.8 1446.7,751.0 1462.0,728.5 1484.6,691.8 1501.0,651.0 1511.0,602.0"/></clipPath></defs><polygon points="709.6,307.7 779.0,297.0 1548.0,525.0 1575.5,500.3 1514.3,559.4 1510.0,602.0 1500.0,651.0 1483.6,691.8 1461.0,728.5 1446.0,750.5 1413.0,787.5 727.6,506.4 727.6,469.4 716.9,462.4 710.6,418.9 707.6,372.6" fill="#003c90"/><g filter="url(#cm_ledge)"><g clip-path="url(#cp_ledge)"><polygon points="709.1,307.2 779.0,296.5 1010.0,366.5 1300.0,453.0 1548.0,525.0 1552.0,493.0 1576.3,499.6 1514.3,559.4" fill="rgb(26,26,26)"/><path d="M900 340 L1000 370 L1160 418" fill="none" stroke="rgb(9,9,9)" stroke-width="13" stroke-linecap="butt" stroke-linejoin="round" opacity="0.85" filter="url(#b1)"/><path d="M1150 432 L1300 476" fill="none" stroke="rgb(38,38,38)" stroke-width="16" stroke-linecap="round" stroke-linejoin="round" opacity="0.8" filter="url(#b2)"/><path d="M1250 440 L1360 474" fill="none" stroke="rgb(13,13,13)" stroke-width="10" stroke-linecap="round" stroke-linejoin="round" opacity="0.6" filter="url(#b1)"/><path d="M815 330 L850 339 L890 350 L915 358" fill="none" stroke="rgb(71,71,71)" stroke-width="24" stroke-linecap="round" stroke-linejoin="round" opacity="0.9" filter="url(#b2)"/><path d="M716 312 L770 326 L830 339 L880 350" fill="none" stroke="rgb(87,87,87)" stroke-width="11" stroke-linecap="round" stroke-linejoin="round" opacity="0.95" filter="url(#b1)"/><path d="M720 313 L775 327 L815 338" fill="none" stroke="rgb(117,117,117)" stroke-width="8" stroke-linecap="round" stroke-linejoin="round" opacity="0.95" filter="url(#b3)"/><ellipse cx="786" cy="310.5" rx="52" ry="7" fill="url(#r4)" transform="rotate(7 786 310.5)"/><path d="M1330 479 L1360 488 L1405 502" fill="none" stroke="rgb(71,71,71)" stroke-width="26" stroke-linecap="round" stroke-linejoin="round" opacity="0.9" filter="url(#b5)"/><path d="M1385 488 L1470 513" fill="none" stroke="rgb(71,71,71)" stroke-width="8" stroke-linecap="round" stroke-linejoin="round" opacity="0.9" filter="url(#b3)"/><path d="M1350 506 L1405 522" fill="none" stroke="rgb(133,133,133)" stroke-width="8" stroke-linecap="round" stroke-linejoin="round" opacity="0.9" filter="url(#b1)"/><path d="M1400 523 L1450 539 L1512 557" fill="none" stroke="rgb(82,82,82)" stroke-width="9" stroke-linecap="round" stroke-linejoin="round" opacity="0.9" filter="url(#b1)"/><ellipse cx="1461" cy="519" rx="70" ry="10.5" fill="url(#r6)" transform="rotate(16.5 1461 519)"/><path d="M1480 541 L1530 553" fill="none" stroke="rgb(56,56,56)" stroke-width="2.5" stroke-linecap="round" stroke-linejoin="round" opacity="0.8" filter="url(#b7)"/><ellipse cx="1557" cy="497" rx="15" ry="9" fill="url(#r8)" transform="rotate(15 1557 497)"/></g></g><g filter="url(#cm_wall)"><g clip-path="url(#cp_wall)"><polygon points="798.0,183.4 815.0,188.0 815.0,197.0 929.0,224.0 930.5,216.5 961.7,221.4 971.0,217.5 979.0,210.5 984.5,201.0 987.2,191.5 988.5,178.0 989.9,164.3 1000.2,154.8 1000.8,144.0 1003.0,137.0 1007.6,132.3 1015.7,129.0 1095.9,144.5 1092.6,187.4 1101.8,205.1 1148.0,214.6 1163.8,203.2 1168.7,159.5 1260.3,176.0 1267.0,179.5 1272.0,187.5 1274.0,207.5 1281.8,227.2 1277.8,265.0 1279.0,275.0 1282.4,283.1 1287.0,291.0 1293.0,298.3 1299.0,303.5 1306.6,308.0 1341.4,315.8 1341.4,327.0 1521.4,371.5 1524.2,361.8 1556.4,368.5 1558.0,381.0 1562.0,413.3 1551.2,426.9 1552.5,492.0 1548.4,526.0 1300.0,453.5 1010.0,367.0 779.0,297.0 783.8,262.2 790.5,226.8 787.8,218.7 790.5,205.1" fill="rgb(28,28,28)"/><ellipse cx="862" cy="245" rx="105" ry="60" fill="url(#r9)" transform="rotate(15 862 245)"/><ellipse cx="1490" cy="418" rx="110" ry="78" fill="url(#r10)" transform="rotate(20 1490 418)"/><ellipse cx="1128" cy="250" rx="30" ry="45" fill="url(#r11)" transform="rotate(0 1128 250)"/><ellipse cx="1130" cy="330" rx="90" ry="60" fill="url(#r12)" transform="rotate(0 1130 330)"/><path d="M1114.1 199.1 L1113.0 200.0 L1111.7 200.9 L1110.1 202.0 L1108.1 203.2 L1105.6 204.8 L1102.3 206.8 L1099.2 211.1 L1095.4 215.9 L1090.8 221.1 L1085.6 226.5 L1080.1 232.1 L1074.3 237.5 L1068.4 242.6 L1062.2 247.7 L1055.6 252.9 L1048.6 258.2 L1041.2 263.5 L1033.3 268.7 L1024.7 273.0 L1015.9 277.2 L1007.1 281.2 L998.6 285.0 L990.6 288.7 L983.1 292.2 L975.5 295.0 L968.3 297.6 L961.7 300.0 L955.7 302.3 L950.4 304.5 L945.4 306.7 L940.2 308.7 L935.2 310.7 L930.6 312.6 L926.4 314.5 L922.6 316.4 L919.0 318.3 L915.3 320.4 L912.0 322.4 L909.1 324.2 L906.8 325.9 L904.8 327.6 L903.2 329.1 L901.4 330.5 L899.5 332.1 L897.4 334.1 L895.2 336.3 L892.8 338.9 L890.7 341.3 L888.8 343.6 L886.4 346.8 L883.7 350.7 L880.9 354.8 L878.2 358.8 L876.1 361.8 L803.7 311.8 L805.5 309.2 L808.0 305.4 L811.3 300.6 L815.1 295.2 L819.3 289.6 L823.6 284.3 L827.6 279.5 L831.6 275.0 L835.8 270.5 L840.4 266.1 L845.2 261.7 L850.4 257.4 L855.9 253.6 L861.5 250.1 L867.0 247.0 L872.5 244.1 L878.0 241.4 L883.6 238.9 L889.4 236.2 L895.4 233.6 L901.4 231.2 L907.5 228.9 L913.6 226.7 L919.9 224.5 L926.6 222.2 L933.4 219.9 L940.0 217.8 L946.6 215.8 L953.3 213.7 L960.2 211.4 L968.1 209.5 L976.5 207.4 L985.0 205.3 L993.4 203.2 L1001.3 201.1 L1008.7 198.9 L1016.0 197.7 L1023.4 196.2 L1030.7 194.5 L1038.0 192.8 L1045.2 191.1 L1052.1 189.4 L1059.1 188.5 L1066.1 187.5 L1073.0 186.4 L1079.6 185.4 L1085.8 184.7 L1091.2 184.3 L1095.2 183.0 L1098.3 182.1 L1100.9 181.4 L1103.0 181.1 L1104.6 180.9 L1105.9 180.9Z" fill="rgb(64,64,64)" opacity="0.95" filter="url(#b5)"/><path d="M1060 258 C1030 268 1000 274 970 283 C950 290 935 302 916 322 L904 340" fill="none" stroke="rgb(71,71,71)" stroke-width="12" stroke-linecap="round" stroke-linejoin="round" opacity="0.6" filter="url(#b5)"/><path d="M1113.9 198.7 L1112.7 199.2 L1111.2 199.8 L1109.5 200.6 L1107.4 201.6 L1104.6 202.9 L1101.2 204.5 L1097.5 207.8 L1093.1 211.5 L1087.9 215.6 L1082.3 219.9 L1076.3 224.2 L1070.2 228.5 L1063.9 232.6 L1057.4 236.7 L1050.5 240.9 L1043.3 245.1 L1035.8 249.3 L1027.9 253.4 L1019.4 256.8 L1010.7 260.0 L1001.9 263.1 L993.2 266.1 L985.0 268.9 L977.2 271.6 L969.6 273.4 L962.3 275.0 L955.5 276.5 L949.1 277.9 L943.1 279.2 L937.3 280.6 L931.6 282.1 L926.0 283.6 L920.7 285.1 L915.7 286.6 L910.9 288.2 L906.3 289.8 L901.8 291.7 L897.5 293.6 L893.5 295.5 L889.8 297.5 L886.3 299.5 L882.9 301.6 L879.7 303.9 L876.5 306.5 L873.3 309.2 L870.1 312.2 L866.9 315.4 L863.9 318.5 L861.1 322.0 L858.0 326.2 L854.8 330.7 L851.8 335.1 L849.2 339.0 L847.2 341.9 L812.8 318.1 L814.6 315.5 L817.2 311.6 L820.4 306.9 L824.1 301.7 L828.1 296.4 L832.1 291.5 L835.8 287.0 L839.6 282.8 L843.6 278.5 L847.8 274.4 L852.3 270.3 L857.1 266.4 L862.0 262.8 L867.0 259.4 L872.1 256.3 L877.2 253.5 L882.4 250.8 L887.7 248.2 L893.2 245.5 L898.9 242.9 L904.7 240.4 L910.5 238.0 L916.5 235.7 L922.7 233.4 L929.2 231.1 L935.8 229.0 L942.4 226.9 L949.0 224.8 L955.7 222.7 L962.8 220.4 L970.7 218.6 L979.2 216.7 L987.8 214.8 L996.3 212.7 L1004.5 210.7 L1012.1 208.6 L1019.6 207.0 L1027.1 205.2 L1034.5 203.3 L1041.8 201.4 L1049.0 199.4 L1055.8 197.5 L1062.6 195.7 L1069.3 193.8 L1075.8 191.9 L1082.0 190.1 L1087.8 188.6 L1092.8 187.5 L1096.4 185.7 L1099.4 184.3 L1101.7 183.3 L1103.6 182.5 L1105.0 181.8 L1106.1 181.3Z" fill="rgb(87,87,87)" opacity="0.95" filter="url(#b2)"/><path d="M1113.1 196.8 L1111.9 197.4 L1110.4 198.0 L1108.7 198.8 L1106.5 199.8 L1103.8 201.1 L1100.3 202.7 L1096.5 205.8 L1091.9 209.3 L1086.7 213.1 L1080.9 217.1 L1074.9 221.2 L1068.7 225.3 L1062.3 229.1 L1055.7 233.0 L1048.8 237.0 L1041.6 240.9 L1034.1 244.9 L1026.3 248.7 L1017.9 251.9 L1009.2 255.0 L1000.4 258.0 L991.7 260.9 L983.5 263.6 L975.7 266.2 L968.2 268.1 L960.9 269.7 L954.1 271.3 L947.7 272.7 L941.6 274.1 L935.9 275.6 L930.0 277.3 L923.7 279.2 L917.6 281.2 L911.9 283.1 L907.0 284.7 L903.3 285.9 L890.7 252.1 L894.0 250.6 L898.7 248.6 L904.4 246.1 L910.8 243.5 L917.5 240.9 L924.1 238.4 L930.7 236.2 L937.2 234.1 L943.8 232.1 L950.4 230.1 L957.2 228.0 L964.3 225.8 L972.2 223.9 L980.6 221.9 L989.3 219.9 L997.8 217.7 L1006.0 215.5 L1013.7 213.3 L1021.3 211.5 L1028.8 209.4 L1036.2 207.3 L1043.4 205.1 L1050.5 202.9 L1057.3 200.7 L1064.0 198.7 L1070.6 196.6 L1077.1 194.4 L1083.2 192.4 L1088.8 190.6 L1093.7 189.3 L1097.3 187.5 L1100.2 186.2 L1102.5 185.1 L1104.4 184.3 L1105.8 183.7 L1106.9 183.2Z" fill="rgb(110,110,110)" opacity="0.95" filter="url(#b2)"/><path d="M1112.5 195.5 L1111.3 196.0 L1109.8 196.6 L1108.1 197.4 L1105.9 198.4 L1103.1 199.7 L1099.7 201.4 L1095.7 204.2 L1091.0 207.6 L1085.7 211.2 L1079.9 215.1 L1073.8 219.0 L1067.5 222.8 L1061.2 226.5 L1054.5 230.2 L1047.6 234.0 L1040.3 237.8 L1032.8 241.5 L1025.0 245.1 L1016.7 248.3 L1008.0 251.3 L999.3 254.2 L990.6 257.0 L982.3 259.6 L974.6 262.2 L966.8 264.2 L958.8 266.2 L951.1 268.1 L944.2 269.7 L938.4 271.1 L934.1 272.1 L925.9 241.9 L930.1 240.6 L935.8 238.8 L942.6 236.8 L950.1 234.6 L957.8 232.2 L965.4 229.8 L973.3 227.9 L981.8 225.8 L990.4 223.7 L998.9 221.4 L1007.2 219.2 L1015.0 216.9 L1022.6 214.8 L1030.1 212.6 L1037.4 210.3 L1044.7 207.9 L1051.7 205.5 L1058.5 203.2 L1065.1 201.0 L1071.7 198.6 L1078.0 196.3 L1084.1 194.1 L1089.6 192.1 L1094.3 190.6 L1098.0 188.9 L1100.9 187.5 L1103.2 186.5 L1105.0 185.7 L1106.4 185.0 L1107.5 184.5Z" fill="rgb(122,122,122)" opacity="0.95" filter="url(#b2)"/><path d="M1117.0 199.9 L1115.5 200.6 L1113.8 201.4 L1111.6 202.3 L1109.0 203.5 L1106.0 205.0 L1102.3 206.7 L1098.2 209.2 L1093.1 212.3 L1087.4 215.7 L1081.3 219.2 L1074.9 222.7 L1068.4 225.9 L1061.1 228.0 L1053.3 230.1 L1045.6 232.0 L1038.5 233.6 L1032.5 234.8 L1028.1 235.5 L1021.9 216.5 L1025.9 214.5 L1031.5 212.0 L1038.1 209.2 L1045.1 206.1 L1051.8 203.0 L1057.6 200.1 L1063.4 197.9 L1069.4 195.3 L1075.4 192.6 L1081.3 189.9 L1086.8 187.4 L1091.7 185.3 L1095.6 183.3 L1098.9 181.8 L1101.6 180.5 L1103.9 179.5 L1105.6 178.7 L1107.0 178.1Z" fill="rgb(145,145,145)" opacity="0.95" filter="url(#b13)"/><path d="M1116.6 199.0 L1115.0 199.7 L1113.0 200.7 L1110.5 201.8 L1107.7 203.1 L1104.8 204.5 L1101.8 205.9 L1098.7 207.4 L1095.4 209.1 L1091.7 211.0 L1087.9 212.9 L1083.9 214.9 L1079.7 217.0 L1074.7 218.5 L1069.3 220.2 L1063.7 221.9 L1058.5 223.5 L1054.1 224.7 L1050.8 225.4 L1045.2 212.6 L1047.9 210.7 L1051.8 208.2 L1056.5 205.4 L1061.4 202.5 L1066.2 199.7 L1070.3 197.0 L1074.2 195.2 L1078.0 193.3 L1081.8 191.4 L1085.4 189.5 L1088.9 187.8 L1092.2 186.1 L1095.4 184.6 L1098.4 183.1 L1101.3 181.8 L1103.8 180.7 L1105.9 179.7 L1107.4 179.0Z" fill="rgb(166,166,166)" opacity="0.95" filter="url(#b1)"/><path d="M1116.2 198.1 L1114.6 198.8 L1112.3 199.9 L1109.5 201.2 L1106.6 202.5 L1103.8 203.9 L1101.2 205.1 L1098.8 205.8 L1096.4 206.5 L1094.2 207.2 L1092.0 207.8 L1089.7 208.5 L1087.5 209.2 L1084.8 209.8 L1081.9 210.5 L1078.9 211.2 L1076.1 211.9 L1073.6 212.4 L1071.8 212.6 L1068.2 205.4 L1069.4 204.1 L1071.3 202.4 L1073.5 200.5 L1075.9 198.6 L1078.3 196.6 L1080.5 194.8 L1082.7 193.4 L1084.7 192.1 L1086.7 190.8 L1088.7 189.5 L1090.7 188.3 L1092.8 186.9 L1095.3 185.7 L1098.2 184.4 L1101.1 183.1 L1103.8 181.8 L1106.1 180.7 L1107.8 179.9Z" fill="rgb(194,194,194)" opacity="0.95" filter="url(#b14)"/><ellipse cx="858" cy="300" rx="40" ry="26" fill="url(#r15)" transform="rotate(-45 858 300)"/><ellipse cx="1036" cy="162" rx="42" ry="24" fill="url(#r16)" transform="rotate(12 1036 162)"/><path d="M1003 204 C997 172 1010 151 1036 152 C1054 154 1066 163 1072 176" fill="none" stroke="rgb(82,82,82)" stroke-width="12" stroke-linecap="round" stroke-linejoin="round" opacity="0.85" filter="url(#b5)"/><ellipse cx="1001" cy="184" rx="14" ry="30" fill="url(#r17)" transform="rotate(8 1001 184)"/><ellipse cx="1018" cy="207" rx="24" ry="10" fill="url(#r18)" transform="rotate(-12 1018 207)"/><ellipse cx="1060" cy="182" rx="28" ry="12" fill="url(#r19)" transform="rotate(-8 1060 182)"/><ellipse cx="1026" cy="175" rx="21" ry="13" fill="url(#r20)" transform="rotate(-8 1026 175)"/><ellipse cx="1084" cy="152" rx="26" ry="16" fill="url(#r21)" transform="rotate(10 1084 152)"/><path d="M1139.4 201.1 L1139.8 202.5 L1140.5 204.2 L1141.3 206.3 L1142.5 208.9 L1144.0 211.9 L1145.7 215.2 L1145.6 219.7 L1145.7 225.1 L1146.6 232.0 L1148.8 240.0 L1152.8 249.0 L1158.7 258.4 L1166.0 267.5 L1174.2 276.2 L1182.8 284.6 L1191.4 292.9 L1199.4 300.8 L1206.8 308.5 L1214.7 316.1 L1222.7 323.7 L1230.0 330.7 L1236.3 337.4 L1241.4 343.6 L1245.2 349.3 L1249.0 354.6 L1253.1 360.6 L1257.4 367.3 L1261.8 374.4 L1266.3 381.9 L1270.6 389.0 L1274.4 394.6 L1277.3 399.1 L1279.7 403.4 L1282.0 407.6 L1284.3 411.9 L1286.6 416.4 L1289.0 420.2 L1291.1 423.9 L1293.4 428.0 L1295.9 432.5 L1298.7 437.5 L1301.6 442.5 L1304.4 446.9 L1307.2 451.4 L1310.3 456.4 L1313.8 462.0 L1317.7 468.1 L1322.2 474.8 L1327.1 481.5 L1331.9 487.6 L1336.1 492.9 L1339.7 497.2 L1342.5 500.8 L1344.5 503.5 L1346.7 506.7 L1349.5 511.1 L1352.4 516.0 L1355.2 520.8 L1357.8 525.3 L1359.9 528.8 L1458.1 474.9 L1456.5 471.8 L1454.3 467.2 L1451.4 461.5 L1448.0 455.1 L1444.2 448.2 L1440.1 441.2 L1435.4 434.7 L1430.8 428.8 L1426.6 423.5 L1422.8 418.8 L1419.5 414.8 L1416.8 411.2 L1414.3 407.6 L1411.6 403.5 L1408.8 399.0 L1405.8 394.2 L1402.6 389.0 L1399.3 383.8 L1396.2 379.0 L1393.3 374.4 L1390.1 369.4 L1386.6 364.1 L1382.9 358.5 L1378.9 353.0 L1374.9 347.8 L1370.9 342.8 L1366.6 337.6 L1362.0 332.1 L1356.9 326.4 L1351.6 320.6 L1345.8 314.8 L1339.4 308.2 L1332.1 300.8 L1324.1 293.1 L1315.4 285.2 L1305.8 277.4 L1295.6 270.5 L1285.4 264.4 L1275.5 259.0 L1266.0 254.0 L1256.9 249.4 L1247.9 244.6 L1237.6 239.9 L1226.9 235.3 L1216.5 230.8 L1207.0 226.7 L1198.8 223.1 L1192.7 220.4 L1188.0 218.4 L1183.8 216.2 L1179.7 213.3 L1175.7 209.8 L1171.5 205.9 L1167.1 202.3 L1164.4 199.0 L1162.4 196.6 L1160.6 194.7 L1159.1 193.1 L1157.8 191.9 L1156.6 190.9Z" fill="rgb(64,64,64)" opacity="0.95" filter="url(#b5)"/><path d="M1180 282 C1210 310 1250 336 1285 370 C1315 400 1340 440 1362 490" fill="none" stroke="rgb(71,71,71)" stroke-width="12" stroke-linecap="round" stroke-linejoin="round" opacity="0.5" filter="url(#b5)"/><path d="M1358 330 C1385 360 1414 394 1449 456 L1475 500" fill="none" stroke="rgb(69,69,69)" stroke-width="9" stroke-linecap="round" stroke-linejoin="round" opacity="0.6" filter="url(#b13)"/><path d="M1139.9 200.9 L1140.6 202.1 L1141.5 203.6 L1142.6 205.5 L1144.1 207.9 L1145.9 210.8 L1147.9 213.9 L1148.8 218.0 L1149.8 223.0 L1151.6 229.2 L1154.4 236.2 L1158.7 243.9 L1164.6 251.7 L1172.1 259.2 L1180.6 266.4 L1189.7 273.6 L1199.0 280.6 L1207.9 287.3 L1216.2 294.0 L1224.6 300.4 L1233.3 306.7 L1241.4 312.7 L1249.0 318.5 L1255.8 324.2 L1261.6 329.8 L1267.4 335.4 L1273.1 341.6 L1278.7 348.3 L1284.3 355.2 L1289.7 362.1 L1294.8 368.6 L1299.3 374.0 L1303.1 378.7 L1306.5 383.1 L1309.7 387.4 L1312.8 391.8 L1315.9 396.2 L1319.0 400.5 L1321.9 404.7 L1324.7 409.0 L1327.6 413.6 L1330.7 418.3 L1333.7 423.2 L1336.7 427.8 L1339.6 432.5 L1342.7 437.5 L1346.0 442.8 L1349.5 448.2 L1353.3 453.9 L1357.5 459.6 L1361.8 465.0 L1365.8 470.1 L1369.6 474.7 L1373.0 479.1 L1375.9 483.0 L1378.8 487.4 L1382.0 492.6 L1385.2 497.9 L1388.1 503.0 L1390.7 507.5 L1392.7 510.8 L1439.3 485.2 L1437.7 482.0 L1435.5 477.4 L1432.6 471.8 L1429.3 465.6 L1425.8 459.3 L1422.1 453.0 L1418.2 446.9 L1414.2 441.3 L1410.3 435.9 L1406.7 431.0 L1403.5 426.4 L1400.7 422.1 L1398.0 417.8 L1395.4 413.2 L1392.8 408.3 L1390.1 403.3 L1387.2 398.1 L1384.3 392.8 L1381.5 387.9 L1378.7 383.0 L1375.9 378.0 L1372.9 372.7 L1369.6 367.3 L1366.1 361.8 L1362.4 356.6 L1358.8 351.6 L1355.0 346.4 L1350.8 341.0 L1346.2 335.3 L1341.2 329.4 L1335.7 323.3 L1329.6 316.6 L1322.8 309.2 L1315.3 301.5 L1307.2 293.7 L1298.4 286.2 L1288.8 279.7 L1279.0 273.8 L1269.4 268.6 L1260.0 263.6 L1250.9 258.9 L1241.8 254.0 L1231.9 249.0 L1221.6 243.9 L1211.4 238.9 L1202.0 234.2 L1193.8 229.9 L1187.4 226.3 L1182.6 223.1 L1178.5 219.8 L1174.8 216.1 L1171.3 212.1 L1167.8 207.9 L1164.1 204.1 L1161.9 200.6 L1160.2 197.9 L1158.9 195.7 L1157.8 193.9 L1156.9 192.4 L1156.1 191.1Z" fill="rgb(87,87,87)" opacity="0.95" filter="url(#b2)"/><path d="M1141.6 199.9 L1142.3 201.1 L1143.2 202.6 L1144.3 204.5 L1145.8 206.9 L1147.5 209.7 L1149.6 212.9 L1150.8 217.0 L1152.1 221.9 L1154.0 227.8 L1156.9 234.5 L1161.2 241.7 L1167.0 249.1 L1174.4 256.1 L1182.9 263.0 L1192.0 269.9 L1201.3 276.7 L1210.4 283.3 L1218.9 289.8 L1227.4 296.0 L1236.1 302.1 L1244.4 308.0 L1252.2 313.8 L1259.3 319.5 L1265.5 325.2 L1271.5 331.0 L1277.5 337.4 L1283.4 344.2 L1289.1 351.2 L1294.5 358.0 L1299.7 364.5 L1304.3 369.9 L1308.1 374.7 L1311.6 379.2 L1314.9 383.6 L1318.0 388.1 L1321.2 392.6 L1324.3 397.0 L1327.2 401.3 L1330.1 405.7 L1333.0 410.3 L1336.0 415.1 L1339.1 420.0 L1342.4 425.2 L1345.9 430.9 L1349.5 436.6 L1352.8 441.8 L1355.6 446.3 L1357.7 449.5 L1396.3 426.5 L1394.5 423.1 L1391.9 418.5 L1388.8 413.1 L1385.4 407.2 L1382.0 401.3 L1378.9 396.0 L1376.1 391.1 L1373.4 386.2 L1370.5 381.3 L1367.5 376.1 L1364.2 370.8 L1360.8 365.4 L1357.2 360.3 L1353.7 355.3 L1349.9 350.3 L1345.8 345.0 L1341.3 339.4 L1336.3 333.5 L1330.8 327.4 L1324.8 320.6 L1318.1 313.3 L1310.9 305.7 L1303.0 298.1 L1294.5 290.8 L1285.3 284.4 L1275.9 278.5 L1266.5 273.2 L1257.2 268.2 L1248.1 263.3 L1239.1 258.2 L1229.4 253.0 L1219.2 247.7 L1209.1 242.6 L1199.7 237.6 L1191.5 233.0 L1185.0 228.9 L1180.1 225.3 L1175.9 221.5 L1172.3 217.5 L1169.0 213.2 L1165.8 209.0 L1162.4 205.1 L1160.2 201.7 L1158.5 199.0 L1157.2 196.8 L1156.1 194.9 L1155.2 193.4 L1154.4 192.1Z" fill="rgb(107,107,107)" opacity="0.95" filter="url(#b2)"/><path d="M1142.9 199.1 L1143.6 200.3 L1144.5 201.8 L1145.6 203.7 L1147.0 206.1 L1148.8 208.9 L1150.9 212.1 L1152.3 216.2 L1153.8 221.0 L1155.9 226.8 L1158.8 233.2 L1163.1 240.1 L1168.8 247.0 L1176.1 253.8 L1184.5 260.5 L1193.7 267.2 L1203.1 273.8 L1212.3 280.3 L1220.9 286.6 L1229.5 292.7 L1238.2 298.7 L1246.6 304.6 L1254.6 310.3 L1261.9 316.0 L1268.4 321.8 L1274.7 327.7 L1280.8 334.2 L1286.8 341.1 L1292.6 348.1 L1298.2 355.0 L1303.3 361.4 L1308.0 366.9 L1311.9 371.8 L1315.4 376.3 L1318.7 380.8 L1322.0 385.3 L1325.2 389.8 L1328.5 394.6 L1331.9 399.9 L1335.3 405.2 L1338.4 410.2 L1341.1 414.5 L1343.1 417.6 L1374.9 398.4 L1373.1 395.2 L1370.7 390.9 L1367.6 385.6 L1364.2 379.8 L1360.5 373.8 L1356.8 368.2 L1353.3 363.1 L1349.8 358.2 L1346.1 353.2 L1342.0 347.9 L1337.6 342.4 L1332.7 336.6 L1327.2 330.5 L1321.2 323.7 L1314.7 316.4 L1307.5 308.9 L1299.8 301.4 L1291.6 294.2 L1282.7 287.9 L1273.5 282.1 L1264.3 276.7 L1255.1 271.6 L1246.1 266.5 L1237.1 261.4 L1227.5 256.1 L1217.4 250.6 L1207.4 245.3 L1198.0 240.2 L1189.8 235.3 L1183.2 231.0 L1178.2 227.0 L1174.0 222.8 L1170.5 218.5 L1167.3 214.1 L1164.3 209.8 L1161.1 205.9 L1158.9 202.5 L1157.3 199.8 L1155.9 197.5 L1154.8 195.7 L1153.9 194.2 L1153.1 192.9Z" fill="rgb(122,122,122)" opacity="0.95" filter="url(#b2)"/><path d="M1137.5 200.8 L1138.2 202.0 L1139.0 203.7 L1140.2 205.9 L1141.7 208.6 L1143.6 211.8 L1145.8 215.3 L1147.9 219.4 L1150.4 224.4 L1153.4 230.2 L1157.0 236.3 L1161.1 242.5 L1165.9 248.7 L1172.2 253.8 L1179.1 258.6 L1186.1 263.0 L1192.7 266.9 L1198.1 270.0 L1202.1 272.1 L1213.9 255.9 L1210.6 252.7 L1205.9 248.5 L1200.4 243.7 L1194.8 238.7 L1189.8 233.7 L1186.1 229.3 L1182.6 225.7 L1179.0 221.3 L1175.6 216.5 L1172.2 211.6 L1169.1 206.8 L1166.2 202.7 L1164.1 199.4 L1162.6 196.7 L1161.3 194.4 L1160.2 192.4 L1159.3 190.7 L1158.5 189.2Z" fill="rgb(145,145,145)" opacity="0.95" filter="url(#b13)"/><path d="M1138.4 200.4 L1139.2 201.8 L1140.2 203.7 L1141.5 206.0 L1143.0 208.7 L1144.8 211.6 L1146.5 214.6 L1148.4 217.7 L1150.4 221.3 L1152.7 225.2 L1155.3 229.4 L1158.2 233.8 L1161.6 238.1 L1166.0 242.0 L1170.9 245.8 L1175.8 249.5 L1180.4 252.8 L1184.4 255.4 L1187.3 257.2 L1196.7 246.8 L1194.6 244.0 L1191.6 240.4 L1188.0 236.2 L1184.2 231.9 L1180.9 227.6 L1178.4 223.9 L1176.0 220.8 L1173.8 217.5 L1171.6 213.9 L1169.5 210.3 L1167.4 206.7 L1165.5 203.4 L1163.7 200.5 L1162.1 197.8 L1160.7 195.2 L1159.5 193.0 L1158.4 191.1 L1157.6 189.6Z" fill="rgb(166,166,166)" opacity="0.95" filter="url(#b1)"/><path d="M1139.3 199.9 L1140.1 201.4 L1141.3 203.6 L1142.8 206.2 L1144.4 208.9 L1146.0 211.7 L1147.5 214.2 L1149.1 216.3 L1150.8 218.2 L1152.4 220.1 L1154.0 221.9 L1155.7 223.8 L1157.5 225.7 L1159.8 227.7 L1162.3 229.8 L1164.8 231.9 L1167.1 233.9 L1169.2 235.5 L1170.8 236.5 L1177.2 231.5 L1176.6 229.7 L1175.5 227.3 L1174.2 224.6 L1172.8 221.7 L1171.5 218.9 L1170.5 216.3 L1169.4 214.2 L1168.3 212.1 L1167.4 210.1 L1166.4 208.0 L1165.5 205.9 L1164.5 203.8 L1163.2 201.6 L1161.7 199.0 L1160.2 196.3 L1158.8 193.8 L1157.6 191.7 L1156.7 190.1Z" fill="rgb(194,194,194)" opacity="0.95" filter="url(#b14)"/><ellipse cx="1234" cy="200" rx="44" ry="26" fill="url(#r22)" transform="rotate(12 1234 200)"/><path d="M1206 190 C1220 180 1245 178 1260 190 C1270 205 1270 230 1268 255" fill="none" stroke="rgb(82,82,82)" stroke-width="12" stroke-linecap="round" stroke-linejoin="round" opacity="0.85" filter="url(#b5)"/><ellipse cx="1267" cy="228" rx="12" ry="32" fill="url(#r23)" transform="rotate(-3 1267 228)"/><ellipse cx="1256" cy="262" rx="20" ry="14" fill="url(#r24)" transform="rotate(30 1256 262)"/><ellipse cx="1205" cy="203" rx="28" ry="15" fill="url(#r25)" transform="rotate(25 1205 203)"/><ellipse cx="1238" cy="221" rx="22" ry="13" fill="url(#r26)" transform="rotate(22 1238 221)"/><ellipse cx="1186" cy="170" rx="24" ry="16" fill="url(#r27)" transform="rotate(10 1186 170)"/><ellipse cx="1276" cy="274" rx="7" ry="10" fill="url(#r28)" transform="rotate(-10 1276 274)"/><ellipse cx="1235" cy="405" rx="75" ry="45" fill="url(#r29)" transform="rotate(35 1235 405)"/><ellipse cx="965" cy="322" rx="60" ry="22" fill="url(#r30)" transform="rotate(17 965 322)"/><ellipse cx="793" cy="250" rx="8" ry="45" fill="url(#r31)" transform="rotate(8 793 250)"/><ellipse cx="836" cy="295" rx="10" ry="9" fill="url(#r32)" transform="rotate(0 836 295)"/><ellipse cx="838" cy="300" rx="8.5" ry="9.5" fill="url(#r33)" transform="rotate(0 838 300)"/><ellipse cx="914" cy="320" rx="10" ry="9" fill="url(#r34)" transform="rotate(0 914 320)"/><ellipse cx="916" cy="325" rx="8.5" ry="9.5" fill="url(#r35)" transform="rotate(0 916 325)"/><ellipse cx="997" cy="341" rx="10" ry="9" fill="url(#r36)" transform="rotate(0 997 341)"/><ellipse cx="999" cy="346" rx="8.5" ry="9.5" fill="url(#r37)" transform="rotate(0 999 346)"/><ellipse cx="1218" cy="404" rx="10" ry="9" fill="url(#r38)" transform="rotate(0 1218 404)"/><ellipse cx="1220" cy="409" rx="8.5" ry="9.5" fill="url(#r39)" transform="rotate(0 1220 409)"/><ellipse cx="1323" cy="437" rx="10" ry="9" fill="url(#r40)" transform="rotate(0 1323 437)"/><ellipse cx="1325" cy="442" rx="8.5" ry="9.5" fill="url(#r41)" transform="rotate(0 1325 442)"/><ellipse cx="1441" cy="473" rx="10" ry="9" fill="url(#r42)" transform="rotate(0 1441 473)"/><ellipse cx="1443" cy="478" rx="8.5" ry="9.5" fill="url(#r43)" transform="rotate(0 1443 478)"/></g></g><g filter="url(#cm_prot)"><g clip-path="url(#cp_prot)"><polygon points="971.0,600.0 971.0,621.0 1068.0,661.5 1084.0,653.8 1084.0,646.0" fill="rgb(15,15,15)"/><ellipse cx="1030" cy="642" rx="40" ry="7" fill="url(#r44)" transform="rotate(22 1030 642)"/><ellipse cx="1022" cy="628" rx="8" ry="14" fill="url(#r45)" transform="rotate(0 1022 628)"/></g></g><g filter="url(#cm_front)"><g clip-path="url(#cp_front)"><polygon points="709.1,307.2 1514.3,559.4 1511.0,602.0 1501.0,651.0 1484.6,691.8 1462.0,728.5 1446.7,751.0 1423.2,743.8 1412.7,788.3 727.0,506.9 727.0,468.9 716.2,462.1 710.0,418.9 707.0,372.6" fill="rgb(28,28,28)"/><ellipse cx="872" cy="462" rx="32" ry="85" fill="url(#r46)" transform="rotate(8 872 462)"/><ellipse cx="1034" cy="505" rx="28" ry="120" fill="url(#r47)" transform="rotate(8 1034 505)"/><ellipse cx="1027" cy="552" rx="3" ry="30" fill="url(#r48)" transform="rotate(4 1027 552)"/><path d="M1072 630 L1140 658 L1215 689" fill="none" stroke="rgb(54,54,54)" stroke-width="24" stroke-linecap="round" stroke-linejoin="round" opacity="0.7" filter="url(#b49)"/><ellipse cx="1264" cy="600" rx="40" ry="115" fill="url(#r50)" transform="rotate(8 1264 600)"/><path d="M707.2 488.4 L711.9 490.4 L718.3 493.1 L725.9 496.4 L734.4 500.0 L743.4 503.8 L752.5 507.5 L761.9 510.9 L771.9 514.5 L782.1 518.1 L792.5 521.9 L802.8 525.7 L812.9 529.5 L822.8 533.4 L832.9 537.4 L843.0 541.6 L853.1 545.8 L863.3 550.1 L873.4 554.5 L883.6 558.7 L893.6 563.0 L903.8 567.5 L914.1 571.9 L924.5 576.4 L935.2 580.9 L946.9 585.7 L959.6 590.9 L972.5 596.1 L984.5 600.8 L994.7 604.7 L1002.1 607.4 L1007.1 596.5 L1000.2 592.7 L990.5 587.8 L979.0 582.0 L966.6 575.8 L954.5 569.6 L943.5 563.8 L933.6 558.2 L923.8 552.6 L914.2 547.0 L904.6 541.3 L895.0 535.7 L885.3 530.2 L875.6 524.6 L865.9 519.0 L856.2 513.5 L846.4 508.0 L836.6 502.7 L826.7 497.4 L816.5 492.5 L806.1 487.8 L795.8 483.2 L785.8 478.8 L776.3 474.5 L767.5 470.5 L758.8 466.9 L750.0 463.2 L741.6 459.6 L734.0 456.3 L727.6 453.6 L722.8 451.6Z" fill="rgb(74,74,74)" opacity="0.92" filter="url(#b51)"/><path d="M795 440 C805 470 835 500 905 532" fill="none" stroke="rgb(56,56,56)" stroke-width="24" stroke-linecap="round" stroke-linejoin="round" opacity="0.6" filter="url(#b52)"/><path d="M1222.6 673.5 L1228.0 677.2 L1235.7 681.8 L1244.9 687.2 L1255.0 692.9 L1265.2 698.6 L1275.0 704.0 L1284.4 708.6 L1293.9 713.2 L1303.5 717.8 L1313.3 722.4 L1323.4 727.1 L1333.9 731.9 L1345.8 736.6 L1359.1 741.7 L1372.7 746.9 L1385.4 751.8 L1396.1 755.9 L1403.8 758.9 L1416.2 725.1 L1408.4 722.4 L1397.6 718.6 L1384.8 714.1 L1371.2 709.2 L1357.9 704.5 L1346.1 700.1 L1335.3 696.7 L1324.8 693.3 L1314.6 689.9 L1304.6 686.6 L1294.8 683.3 L1285.0 680.0 L1274.6 676.8 L1263.5 673.3 L1252.6 669.8 L1242.4 666.6 L1233.8 664.1 L1227.4 662.5Z" fill="rgb(66,66,66)" opacity="0.85" filter="url(#b51)"/><ellipse cx="748" cy="388" rx="104" ry="120" fill="url(#r53)" transform="rotate(-5 748 388)"/><path d="M690 280 L826 322 C802 362 790 395 768 432 L722 464 L690 470z" fill="rgb(84,84,84)" opacity="0.95" filter="url(#b52)"/><path d="M690 280 L806 316 C782 352 770 392 752 425 L718 455 L690 460z" fill="rgb(102,102,102)" opacity="0.9" filter="url(#b52)"/><path d="M690 285 L785 314 C765 345 752 372 740 400 L690 410z" fill="rgb(117,117,117)" opacity="0.85" filter="url(#b54)"/><path d="M708 308 L705.5 372 L709 419 L715 462" fill="none" stroke="rgb(36,36,36)" stroke-width="7" stroke-linecap="butt" stroke-linejoin="round" opacity="0.8" filter="url(#b55)"/><path d="M716 313 L835 351" fill="none" stroke="rgb(102,102,102)" stroke-width="8" stroke-linecap="round" stroke-linejoin="round" opacity="0.8" filter="url(#b1)"/><ellipse cx="866" cy="383" rx="40" ry="38" fill="url(#r56)" transform="rotate(0 866 383)"/><ellipse cx="720" cy="465" rx="10" ry="10" fill="url(#r57)" transform="rotate(32 720 465)"/><ellipse cx="720" cy="465.5" rx="6.5" ry="5.5" fill="url(#r58)" transform="rotate(32 720 465.5)"/><ellipse cx="1424" cy="625" rx="126" ry="150" fill="url(#r59)" transform="rotate(12 1424 625)"/><path d="M1352 488 L1504 537 L1497 580 L1487 640 L1469 690 L1454 745 L1440 765 L1412 748 C1388 705 1368 650 1370 600 C1374 570 1362 530 1352 488z" fill="rgb(84,84,84)" opacity="0.95" filter="url(#b52)"/><path d="M1368 492 L1498 535 L1490 580 L1480 640 L1462 688 L1448 735 L1436 750 L1420 738 C1400 700 1384 650 1386 600 C1390 570 1378 530 1368 492z" fill="rgb(99,99,99)" opacity="0.9" filter="url(#b52)"/><ellipse cx="1428" cy="562" rx="44" ry="48" fill="url(#r60)" transform="rotate(10 1428 562)"/><ellipse cx="1250" cy="512" rx="44" ry="58" fill="url(#r61)" transform="rotate(8 1250 512)"/><ellipse cx="1435.5" cy="748" rx="13" ry="12" fill="url(#r62)" transform="rotate(17 1435.5 748)"/><ellipse cx="1436" cy="749" rx="8" ry="6.5" fill="url(#r63)" transform="rotate(17 1436 749)"/></g></g><g filter="url(#cm_endf)"><g clip-path="url(#cp_endf)"><polygon points="1514.3,559.4 1576.3,499.6 1572.0,529.0 1562.0,582.0 1543.7,630.7 1515.0,679.6 1474.4,724.4 1446.7,750.9 1412.7,788.3 1423.2,743.8 1446.7,751.0 1462.0,728.5 1484.6,691.8 1501.0,651.0 1511.0,602.0" fill="rgb(0,0,0)"/><ellipse cx="1560" cy="520" rx="30" ry="60" fill="url(#r64)" transform="rotate(20 1560 520)"/></g></g><g font-family="Liberation Sans, sans-serif" fill="#fff">
<line x1="753.3" y1="714" x2="758" y2="675" stroke="#f0ec30" stroke-width="1.4"/>
<polygon points="755,675.3 762.8,675.8 759.4,665.4" fill="#e8e418"/>
<line x1="753.3" y1="714" x2="722" y2="704.4" stroke="#30d030" stroke-width="1.2"/>
<polygon points="715,702.8 722.9,700.8 721,708" fill="#168a16"/>
<line x1="753.3" y1="714" x2="734" y2="721.5" stroke="#e02020" stroke-width="1.2"/>
<polygon points="723.9,726.1 729.2,718.6 733.6,727.2" fill="#b80c0c"/>
<ellipse cx="730.3" cy="723.6" rx="3.6" ry="3.9" fill="#b80c0c"/>
<text x="761.6" y="675.8" font-size="14.5">Y</text><text x="723.4" y="704.6" font-size="12.5">Z</text><text x="733" y="724.5" font-size="16">X</text>
</g></svg><div class="abs" style="left:1433px;top:778px;width:137px;height:40px;background:#005f9b;border-radius:3px 3px 0 0"></div><svg class="abs" style="left:1442px;top:787px" width="26" height="17" viewBox="0 0 26 17"><ellipse cx="13" cy="7.5" rx="12.5" ry="7.3" fill="#fff"/><path d="M17 13 L23.5 16.8 L21 11z" fill="#fff"/><rect x="7.5" y="3.6" width="11" height="8" rx="1.2" fill="#005f9b"/><rect x="10.6" y="2.4" width="4.6" height="2" fill="#005f9b"/><circle cx="13" cy="7.6" r="2.5" fill="#fff"/><circle cx="13" cy="7.6" r="1.3" fill="#005f9b"/></svg><span class="t" style="left:1477.5px;top:788.64px;font-size:12px;color:#fff;font-weight:400;transform:scaleX(0.9875);transform-origin:0 0;">Report an issue</span>
</body>
</html>
